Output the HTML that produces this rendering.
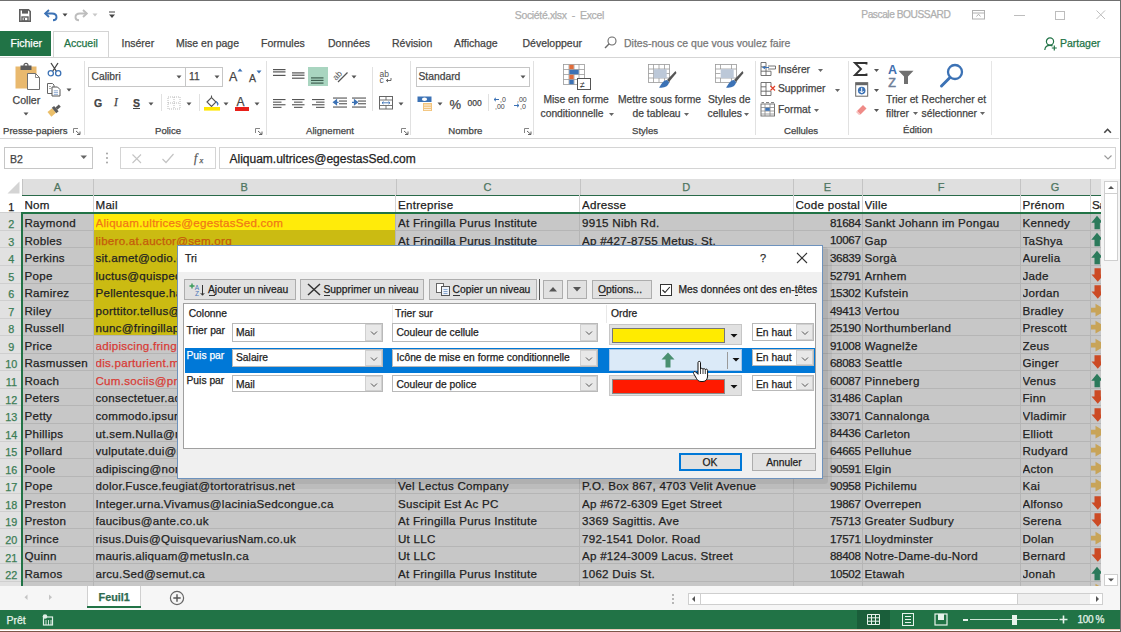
<!DOCTYPE html>
<html><head><meta charset="utf-8"><style>
html,body{margin:0;padding:0;width:1121px;height:632px;overflow:hidden;background:#fff}
body{position:relative;font-family:'Liberation Sans', sans-serif}
div{position:absolute;box-sizing:content-box}
.t{white-space:pre;-webkit-text-stroke:0.25px currentColor}
svg{overflow:visible}
</style></head><body>
<div style="left:0px;top:0px;width:1121px;height:632px;background:#fff"></div><div style="left:0px;top:0px;width:1121px;height:1px;background:#707070"></div><div class="t" style="left:514.8px;top:9.88px;font-size:10.5px;line-height:10.5px;color:#afafaf;letter-spacing:-0.35px">Société.xlsx  -  Excel</div><div class="t" style="left:861.3px;top:10.13px;font-size:10.2px;line-height:10.2px;color:#afafaf;letter-spacing:-0.45px">Pascale BOUSSARD</div><div style="left:0px;top:31px;width:51px;height:25px;background:#217346"></div><div class="t" style="left:10.5px;top:38.38px;font-size:10.5px;line-height:10.5px;color:#fff;">Fichier</div><div style="left:53px;top:31px;width:56px;height:27px;background:#fff;border:1px solid #d4d4d4;border-bottom:none;box-sizing:border-box"></div><div class="t" style="left:64px;top:38.38px;font-size:10.5px;line-height:10.5px;color:#217346;">Accueil</div><div class="t" style="left:121.5px;top:38.38px;font-size:10.5px;line-height:10.5px;color:#444;">Insérer</div><div class="t" style="left:176px;top:38.38px;font-size:10.5px;line-height:10.5px;color:#444;">Mise en page</div><div class="t" style="left:261px;top:38.38px;font-size:10.5px;line-height:10.5px;color:#444;">Formules</div><div class="t" style="left:328px;top:38.38px;font-size:10.5px;line-height:10.5px;color:#444;">Données</div><div class="t" style="left:392px;top:38.38px;font-size:10.5px;line-height:10.5px;color:#444;">Révision</div><div class="t" style="left:454px;top:38.38px;font-size:10.5px;line-height:10.5px;color:#444;">Affichage</div><div class="t" style="left:522.5px;top:38.38px;font-size:10.5px;line-height:10.5px;color:#444;">Développeur</div><div class="t" style="left:624px;top:38.38px;font-size:10.5px;line-height:10.5px;color:#777;">Dites-nous ce que vous voulez faire</div><div class="t" style="left:1060px;top:38.38px;font-size:10.5px;line-height:10.5px;color:#217346;">Partager</div><div style="left:0px;top:57px;width:1121px;height:1px;background:#d5d5d5"></div><div style="left:0px;top:138px;width:1119px;height:1px;background:#d5d5d5"></div><svg style="position:absolute;left:19px;top:9px;" width="12" height="13" viewBox="0 0 12 13"><path d="M0.8 0.8 H9.5 L11.2 2.5 V12.2 H0.8 Z" fill="none" stroke="#5f5f5f" stroke-width="1.6"/><rect x="3" y="1" width="6" height="3.6" fill="#5f5f5f"/><rect x="3" y="8" width="6" height="4" fill="none" stroke="#5f5f5f" stroke-width="1.4"/><rect x="4.6" y="9" width="1.4" height="3" fill="#5f5f5f"/></svg><svg style="position:absolute;left:44px;top:9px;" width="14" height="12" viewBox="0 0 14 12"><path d="M1.5 4.5 H8 C11 4.5 12.5 6.3 12.5 8.2 C12.5 10.2 11 11.3 9 11.3" fill="none" stroke="#3c72b5" stroke-width="1.9"/><path d="M5 1 L1.2 4.5 L5 8" fill="none" stroke="#3c72b5" stroke-width="1.9"/></svg><svg style="position:absolute;left:62px;top:13px;" width="6" height="4" viewBox="0 0 6 4"><path d="M0.5 0.5 H5.5 L3 3.5 Z" fill="#444"/></svg><svg style="position:absolute;left:74px;top:9px;" width="14" height="12" viewBox="0 0 14 12"><path d="M12.5 4.5 H6 C3 4.5 1.5 6.3 1.5 8.2 C1.5 10.2 3 11.3 5 11.3" fill="none" stroke="#bdbdbd" stroke-width="1.9"/><path d="M9 1 L12.8 4.5 L9 8" fill="none" stroke="#bdbdbd" stroke-width="1.9"/></svg><svg style="position:absolute;left:92px;top:13px;" width="6" height="4" viewBox="0 0 6 4"><path d="M0.5 0.5 H5.5 L3 3.5 Z" fill="#c8c8c8"/></svg><svg style="position:absolute;left:108px;top:11px;" width="8" height="8" viewBox="0 0 8 8"><path d="M1 1 H7" stroke="#444" stroke-width="1"/><path d="M1 3.5 H7 L4 7 Z" fill="#444"/></svg><svg style="position:absolute;left:972px;top:10px;" width="14" height="10" viewBox="0 0 14 10"><rect x="0.5" y="0.5" width="12" height="8.5" fill="none" stroke="#b0b0b0"/><path d="M0.5 3 H12.5" stroke="#b0b0b0"/><path d="M4.5 6.5 L6.5 4.2 L8.5 6.5" fill="none" stroke="#b0b0b0"/></svg><div style="left:1014px;top:14.5px;width:10.5px;height:1px;background:#bdbdbd"></div><div style="left:1055px;top:10.5px;width:9.5px;height:9px;border:1px solid #bdbdbd;box-sizing:border-box"></div><svg style="position:absolute;left:1096px;top:10px;" width="10" height="10" viewBox="0 0 10 10"><path d="M0.5 0.5 L9 9 M9 0.5 L0.5 9" stroke="#bdbdbd" stroke-width="1"/></svg><svg style="position:absolute;left:604px;top:36px;" width="13" height="13" viewBox="0 0 13 13"><circle cx="8" cy="5" r="4" fill="none" stroke="#6a6a6a" stroke-width="1.1"/><path d="M5.2 7.8 L1 12" stroke="#6a6a6a" stroke-width="1.4"/></svg><svg style="position:absolute;left:1044px;top:37px;" width="13" height="14" viewBox="0 0 13 14"><circle cx="6" cy="4.5" r="3.6" fill="none" stroke="#217346" stroke-width="1.2"/><path d="M0.8 13 C1 9.8 3 8.3 6 8.3 C7.2 8.3 8 8.5 8.6 8.9" fill="none" stroke="#217346" stroke-width="1.2"/><path d="M10.3 8.5 V13.5 M7.8 11 H12.8" stroke="#217346" stroke-width="1.2"/></svg><svg style="position:absolute;left:14px;top:63px;" width="27" height="28" viewBox="0 0 27 28"><rect x="1.5" y="3.5" width="21" height="22" fill="#e9b96e"/><path d="M6.5 2.5 H17.5 V7 H6.5 Z" fill="#5b5b5b"/><circle cx="12" cy="2.3" r="2" fill="none" stroke="#5b5b5b" stroke-width="1.2"/><path d="M13.5 10.5 H21.5 L25.5 14.5 V26.5 H13.5 Z" fill="#fff" stroke="#6f6f6f" stroke-width="1"/><path d="M21.5 10.5 V14.5 H25.5" fill="none" stroke="#6f6f6f" stroke-width="0.8"/></svg><div class="t" style="left:12.5px;top:94.99px;font-size:10.6px;line-height:10.6px;color:#444;">Coller</div><svg style="position:absolute;left:23px;top:112px;" width="6" height="4" viewBox="0 0 6 4"><path d="M0.5 0.5 H5.5 L3 3.5 Z" fill="#555"/></svg><svg style="position:absolute;left:47px;top:62px;" width="15" height="15" viewBox="0 0 15 15"><path d="M4 1 L9.5 9.5 M11 1 L5.5 9.5" stroke="#444" stroke-width="1.3"/><circle cx="3.8" cy="11.3" r="2.6" fill="none" stroke="#3c72b5" stroke-width="1.3"/><circle cx="11.2" cy="11.3" r="2.6" fill="none" stroke="#3c72b5" stroke-width="1.3"/></svg><svg style="position:absolute;left:46px;top:82px;" width="16" height="15" viewBox="0 0 16 15"><path d="M1.5 1.5 H6.5 L8 3 V11.5 H1.5 Z" fill="#fff" stroke="#666" stroke-width="1"/><path d="M6 5 H11.5 L14 7.5 V14 H6 Z" fill="#fff" stroke="#555" stroke-width="1"/><path d="M7.8 8.8 H12 M7.8 10.6 H12 M7.8 12.4 H12" stroke="#7b9bc8" stroke-width="0.8"/><path d="M3 4.5 H5 M3 6.5 H5" stroke="#888" stroke-width="0.7"/></svg><svg style="position:absolute;left:66px;top:88px;" width="6" height="4" viewBox="0 0 6 4"><path d="M0.5 0.5 H5.5 L3 3.5 Z" fill="#555"/></svg><svg style="position:absolute;left:47px;top:103px;" width="15" height="13" viewBox="0 0 15 13"><g transform="rotate(-40 7.5 6.5)"><rect x="0.5" y="4" width="6" height="6" fill="#ebbf6a"/><rect x="6.5" y="3.5" width="3" height="7" fill="#5b5b5b"/><rect x="9.5" y="5.5" width="4.5" height="3" fill="#5b5b5b"/></g></svg><div class="t" style="left:3px;top:125.64px;font-size:9.6px;line-height:9.6px;color:#444;">Presse-papiers</div><svg style="position:absolute;left:73px;top:128px;" width="8" height="7" viewBox="0 0 8 7"><path d="M0.5 0.5 H5 M0.5 0.5 V5" stroke="#777" stroke-width="0.9"/><path d="M3 3 L7 6.5 M7 3.5 V6.5 H4" stroke="#555" stroke-width="0.9" fill="none"/></svg><div style="left:84px;top:61px;width:1px;height:74px;background:#e1e1e1"></div><div style="left:88px;top:67px;width:97.5px;height:20px;border:1px solid #c6c6c6;box-sizing:border-box"></div><div style="left:185px;top:67px;width:38px;height:20px;border:1px solid #c6c6c6;border-left:none;box-sizing:border-box"></div><div class="t" style="left:91.5px;top:72.05px;font-size:10.3px;line-height:10.3px;color:#444;">Calibri</div><div class="t" style="left:189px;top:72.05px;font-size:10.3px;line-height:10.3px;color:#444;">11</div><svg style="position:absolute;left:176px;top:75px;" width="6" height="4" viewBox="0 0 6 4"><path d="M0.5 0.5 H5.5 L3 3.5 Z" fill="#555"/></svg><svg style="position:absolute;left:214px;top:75px;" width="6" height="4" viewBox="0 0 6 4"><path d="M0.5 0.5 H5.5 L3 3.5 Z" fill="#555"/></svg><div class="t" style="left:229px;top:70.88px;font-size:12.5px;line-height:12.5px;color:#444;">A</div><svg style="position:absolute;left:237px;top:68px;" width="6" height="4" viewBox="0 0 6 4"><path d="M0.5 3.5 H5.5 L3 0.5 Z" fill="#3c72b5"/></svg><div class="t" style="left:249px;top:72.58px;font-size:10.5px;line-height:10.5px;color:#444;">A</div><svg style="position:absolute;left:255.5px;top:70px;" width="6" height="4" viewBox="0 0 6 4"><path d="M0.5 0.5 H5.5 L3 3.5 Z" fill="#3c72b5"/></svg><div class="t" style="left:94px;top:97.88px;font-size:10.5px;line-height:10.5px;color:#444;font-weight:bold">G</div><div class="t" style="left:114px;top:97.02px;font-size:11.5px;line-height:11.5px;color:#444;font-family:'Liberation Serif';font-style:italic">I</div><div class="t" style="left:133px;top:97.88px;font-size:10.5px;line-height:10.5px;color:#444;font-weight:bold">S</div><div style="left:133px;top:108.3px;width:7px;height:1.2px;background:#444"></div><svg style="position:absolute;left:148px;top:102px;" width="6" height="4" viewBox="0 0 6 4"><path d="M0.5 0.5 H5.5 L3 3.5 Z" fill="#555"/></svg><div style="left:160.5px;top:94px;width:1px;height:17px;background:#e1e1e1"></div><svg style="position:absolute;left:167px;top:96px;" width="14" height="14" viewBox="0 0 14 14"><rect x="1" y="1" width="12" height="12" fill="none" stroke="#aaa" stroke-width="0.8" stroke-dasharray="1 1"/><path d="M7 1 V13 M1 7 H13" stroke="#aaa" stroke-width="0.8" stroke-dasharray="1 1"/></svg><svg style="position:absolute;left:185.5px;top:102px;" width="6" height="4" viewBox="0 0 6 4"><path d="M0.5 0.5 H5.5 L3 3.5 Z" fill="#555"/></svg><div style="left:198.5px;top:94px;width:1px;height:17px;background:#e1e1e1"></div><svg style="position:absolute;left:203px;top:95px;" width="18" height="16" viewBox="0 0 18 16"><path d="M4 7 L8.5 2.5 L13 7 L8.5 11.5 Z" fill="#fff" stroke="#555" stroke-width="1.1"/><path d="M8.5 2.5 V0.5" stroke="#555" stroke-width="1.1"/><path d="M13 6.5 C15 7 15.5 9 14.5 10.5" fill="#3c72b5" stroke="#3c72b5"/><rect x="1" y="12" width="16" height="3.6" fill="#ffe600"/></svg><svg style="position:absolute;left:223px;top:102px;" width="6" height="4" viewBox="0 0 6 4"><path d="M0.5 0.5 H5.5 L3 3.5 Z" fill="#555"/></svg><div class="t" style="left:236.5px;top:95.80px;font-size:12px;line-height:12px;color:#444;">A</div><div style="left:234.5px;top:107px;width:14.5px;height:3.6px;background:#e8201a"></div><svg style="position:absolute;left:253.5px;top:102px;" width="6" height="4" viewBox="0 0 6 4"><path d="M0.5 0.5 H5.5 L3 3.5 Z" fill="#555"/></svg><div class="t" style="left:155px;top:125.84px;font-size:9.6px;line-height:9.6px;color:#444;">Police</div><svg style="position:absolute;left:255px;top:128px;" width="8" height="7" viewBox="0 0 8 7"><path d="M0.5 0.5 H5 M0.5 0.5 V5" stroke="#777" stroke-width="0.9"/><path d="M3 3 L7 6.5 M7 3.5 V6.5 H4" stroke="#555" stroke-width="0.9" fill="none"/></svg><div style="left:265.5px;top:61px;width:1px;height:74px;background:#e1e1e1"></div><svg style="position:absolute;left:273px;top:68px;" width="14" height="10" viewBox="0 0 14 10"><rect x="0" y="1" width="12.5" height="1.2" fill="#555"/><rect x="0" y="3.3" width="12.5" height="1.2" fill="#555"/><rect x="0" y="6.8" width="12.5" height="1.2" fill="#555"/></svg><svg style="position:absolute;left:292px;top:71px;" width="14" height="10" viewBox="0 0 14 10"><rect x="0" y="1.3" width="12.5" height="1.2" fill="#555"/><rect x="0" y="3.6" width="12.5" height="1.2" fill="#555"/><rect x="0" y="6.6" width="12.5" height="1.2" fill="#555"/></svg><div style="left:308.2px;top:67px;width:19.4px;height:19.4px;background:#a9d5c0"></div><svg style="position:absolute;left:311px;top:75px;" width="14" height="10" viewBox="0 0 14 10"><rect x="0" y="2.3" width="12.5" height="1.2" fill="#3f5f50"/><rect x="0" y="4.8" width="12.5" height="1.2" fill="#3f5f50"/><rect x="0" y="7.5" width="12.5" height="1.2" fill="#3f5f50"/></svg><svg style="position:absolute;left:332px;top:69px;" width="17" height="14" viewBox="0 0 17 14"><text x="1" y="9" font-size="8.5" font-family="Liberation Sans" fill="#555" transform="rotate(-45 6 7)">ab</text><path d="M6 13 L15.5 3.5" stroke="#555" stroke-width="1.2"/></svg><svg style="position:absolute;left:351px;top:75px;" width="6" height="4" viewBox="0 0 6 4"><path d="M0.5 0.5 H5.5 L3 3.5 Z" fill="#555"/></svg><div style="left:372px;top:67px;width:1px;height:44px;background:#e1e1e1"></div><svg style="position:absolute;left:379px;top:69px;" width="15" height="15" viewBox="0 0 15 15"><text x="0.5" y="7.5" font-size="8.5" font-family="Liberation Sans" fill="#555">ab</text><text x="0.5" y="14" font-size="8.5" font-family="Liberation Sans" fill="#555">c</text><path d="M12 9 V11.5 H7.5 M9 10 L7.3 11.5 L9 13" fill="none" stroke="#555" stroke-width="0.9"/></svg><svg style="position:absolute;left:272.5px;top:98px;" width="13" height="11" viewBox="0 0 13 11"><rect x="0" y="1" width="12.5" height="1.1" fill="#555"/><rect x="0" y="3.6" width="8.5" height="1.1" fill="#555"/><rect x="0" y="6.2" width="12.5" height="1.1" fill="#555"/><rect x="0" y="8.8" width="8.5" height="1.1" fill="#555"/></svg><svg style="position:absolute;left:292px;top:98px;" width="13" height="11" viewBox="0 0 13 11"><rect x="0.0" y="1" width="12.5" height="1.1" fill="#555"/><rect x="2.0" y="3.6" width="8.5" height="1.1" fill="#555"/><rect x="0.0" y="6.2" width="12.5" height="1.1" fill="#555"/><rect x="2.0" y="8.8" width="8.5" height="1.1" fill="#555"/></svg><svg style="position:absolute;left:311.5px;top:98px;" width="13" height="11" viewBox="0 0 13 11"><rect x="0.0" y="1" width="12.5" height="1.1" fill="#555"/><rect x="4.0" y="3.6" width="8.5" height="1.1" fill="#555"/><rect x="0.0" y="6.2" width="12.5" height="1.1" fill="#555"/><rect x="4.0" y="8.8" width="8.5" height="1.1" fill="#555"/></svg><svg style="position:absolute;left:332.5px;top:97px;" width="15" height="12" viewBox="0 0 15 12"><rect x="0" y="0.5" width="14" height="1.1" fill="#555"/><rect x="6" y="3.5" width="8" height="1.1" fill="#555"/><rect x="6" y="6.2" width="8" height="1.1" fill="#555"/><rect x="0" y="9.5" width="14" height="1.1" fill="#555"/><path d="M0.5 5.3 L3.5 3 V7.6 Z M3 5.3 H5.5" fill="#3c72b5" stroke="#3c72b5" stroke-width="1.2"/></svg><svg style="position:absolute;left:352px;top:97px;" width="15" height="12" viewBox="0 0 15 12"><rect x="0" y="0.5" width="14" height="1.1" fill="#555"/><rect x="6" y="3.5" width="8" height="1.1" fill="#555"/><rect x="6" y="6.2" width="8" height="1.1" fill="#555"/><rect x="0" y="9.5" width="14" height="1.1" fill="#555"/><path d="M5.5 5.3 L2.5 3 V7.6 Z M0 5.3 H3" fill="#3c72b5" stroke="#3c72b5" stroke-width="1.2"/></svg><svg style="position:absolute;left:379px;top:96px;" width="15" height="14" viewBox="0 0 15 14"><rect x="0.5" y="0.5" width="13" height="12.5" fill="#fff" stroke="#666" stroke-width="1"/><path d="M0.5 4 H13.5 M0.5 9.5 H13.5 M7 0.5 V4 M7 9.5 V13" stroke="#666" stroke-width="0.9"/><path d="M3 6.8 H11 M3 6.8 L4.5 5.6 M3 6.8 L4.5 8 M11 6.8 L9.5 5.6 M11 6.8 L9.5 8" stroke="#3c72b5" stroke-width="0.9"/></svg><svg style="position:absolute;left:398px;top:102px;" width="6" height="4" viewBox="0 0 6 4"><path d="M0.5 0.5 H5.5 L3 3.5 Z" fill="#555"/></svg><div class="t" style="left:306px;top:125.84px;font-size:9.6px;line-height:9.6px;color:#444;">Alignement</div><svg style="position:absolute;left:401px;top:128px;" width="8" height="7" viewBox="0 0 8 7"><path d="M0.5 0.5 H5 M0.5 0.5 V5" stroke="#777" stroke-width="0.9"/><path d="M3 3 L7 6.5 M7 3.5 V6.5 H4" stroke="#555" stroke-width="0.9" fill="none"/></svg><div style="left:410px;top:61px;width:1px;height:74px;background:#e1e1e1"></div><div style="left:415.5px;top:67px;width:114.5px;height:19.6px;border:1px solid #c6c6c6;box-sizing:border-box"></div><div class="t" style="left:418.5px;top:72.05px;font-size:10.3px;line-height:10.3px;color:#444;">Standard</div><svg style="position:absolute;left:520px;top:75px;" width="6" height="4" viewBox="0 0 6 4"><path d="M0.5 0.5 H5.5 L3 3.5 Z" fill="#555"/></svg><svg style="position:absolute;left:417px;top:96px;" width="16" height="16" viewBox="0 0 16 16"><rect x="0.5" y="0.5" width="14" height="5.5" fill="#3c72b5"/><ellipse cx="7.5" cy="3.3" rx="2.6" ry="1.8" fill="#fff"/><rect x="6" y="7" width="9" height="8" fill="#f3c47c"/><path d="M7 9 H14 M7 11.3 H14 M7 13.6 H14" stroke="#fff" stroke-width="0.8"/></svg><svg style="position:absolute;left:436.5px;top:102px;" width="6" height="4" viewBox="0 0 6 4"><path d="M0.5 0.5 H5.5 L3 3.5 Z" fill="#555"/></svg><div class="t" style="left:449.5px;top:97.75px;font-size:13px;line-height:13px;color:#444;">%</div><div class="t" style="left:467.5px;top:99.08px;font-size:8.5px;line-height:8.5px;color:#444;">000</div><div style="left:487.5px;top:94px;width:1px;height:17px;background:#e1e1e1"></div><svg style="position:absolute;left:493px;top:95px;" width="15" height="15" viewBox="0 0 15 15"><path d="M1 4.5 H6 M1 4.5 L3 2.8 M1 4.5 L3 6.2" stroke="#3c72b5" stroke-width="1" fill="none"/><text x="7" y="7" font-size="7" font-family="Liberation Sans" fill="#444">,0</text><text x="2" y="14" font-size="7" font-family="Liberation Sans" fill="#444">,00</text></svg><svg style="position:absolute;left:512.5px;top:95px;" width="15" height="15" viewBox="0 0 15 15"><text x="4" y="7" font-size="7" font-family="Liberation Sans" fill="#444">,00</text><path d="M1 10.5 H6 M6 10.5 L4 8.8 M6 10.5 L4 12.2" stroke="#3c72b5" stroke-width="1" fill="none"/><text x="7" y="14" font-size="7" font-family="Liberation Sans" fill="#444">,0</text></svg><div class="t" style="left:448.3px;top:125.84px;font-size:9.6px;line-height:9.6px;color:#444;">Nombre</div><svg style="position:absolute;left:523.5px;top:128px;" width="8" height="7" viewBox="0 0 8 7"><path d="M0.5 0.5 H5 M0.5 0.5 V5" stroke="#777" stroke-width="0.9"/><path d="M3 3 L7 6.5 M7 3.5 V6.5 H4" stroke="#555" stroke-width="0.9" fill="none"/></svg><div style="left:533px;top:61px;width:1px;height:74px;background:#e1e1e1"></div><svg style="position:absolute;left:563px;top:63px;" width="30" height="28" viewBox="0 0 30 28"><g stroke="#9a9a9a" stroke-width="0.8" fill="#fff"><rect x="0.5" y="1.5" width="21" height="20"/></g><path d="M0.5 6.5 H21.5 M0.5 11.5 H21.5 M0.5 16.5 H21.5 M6 1.5 V21.5 M11 1.5 V21.5 M16 1.5 V21.5" stroke="#9a9a9a" stroke-width="0.8"/><rect x="6.3" y="1.8" width="4.4" height="4.4" fill="#e06c3b"/><rect x="6.3" y="6.8" width="9.4" height="4.4" fill="#3c72b5"/><rect x="6.3" y="11.8" width="4.4" height="4.4" fill="#e06c3b"/><rect x="6.3" y="16.8" width="4.4" height="4.4" fill="#3c72b5"/><rect x="14.5" y="15.5" width="13" height="11" fill="#fff" stroke="#555" stroke-width="1"/><text x="17" y="24.5" font-size="9" font-family="Liberation Sans" fill="#333">≠</text></svg><div class="t" style="left:543.5px;top:95.05px;font-size:10.3px;line-height:10.3px;color:#444;">Mise en forme</div><div class="t" style="left:540.5px;top:108.84px;font-size:10.3px;line-height:10.3px;color:#444;">conditionnelle</div><svg style="position:absolute;left:609px;top:112.5px;" width="5" height="3" viewBox="0 0 5 3"><path d="M0 0 H5 L2.5 3 Z" fill="#666"/></svg><svg style="position:absolute;left:648px;top:64px;" width="30" height="27" viewBox="0 0 30 27"><rect x="0.5" y="0.5" width="21" height="18" fill="#fff" stroke="#9a9a9a" stroke-width="0.8"/><path d="M0.5 5 H21.5 M0.5 9.5 H21.5 M0.5 14 H21.5 M5.5 0.5 V18.5 M11 0.5 V18.5 M16.5 0.5 V18.5" stroke="#9a9a9a" stroke-width="0.8"/><rect x="5.7" y="5.2" width="13" height="9" fill="#bcc8d8"/><path d="M27.5 7 L19 16 L21 18 L28.5 9 Z" fill="#555"/><path d="M19 16 C15 16 14 20 11 23.5 C16 24.5 21 22 21 18 Z" fill="#3c72b5"/></svg><div class="t" style="left:618px;top:95.05px;font-size:10.3px;line-height:10.3px;color:#444;">Mettre sous forme</div><div class="t" style="left:632.5px;top:108.84px;font-size:10.3px;line-height:10.3px;color:#444;">de tableau</div><svg style="position:absolute;left:684px;top:112.5px;" width="5" height="3" viewBox="0 0 5 3"><path d="M0 0 H5 L2.5 3 Z" fill="#666"/></svg><svg style="position:absolute;left:715px;top:64px;" width="30" height="27" viewBox="0 0 30 27"><rect x="0.5" y="0.5" width="21" height="18" fill="#fff" stroke="#9a9a9a" stroke-width="0.8"/><path d="M0.5 5 H21.5 M0.5 14 H21.5 M5.5 0.5 V5 M5.5 14 V18.5 M16.5 0.5 V5 M16.5 14 V18.5 M0.5 9.5 H5.5" stroke="#9a9a9a" stroke-width="0.8"/><rect x="5.7" y="5.2" width="13" height="9" fill="#bcc8d8"/><path d="M27.5 7 L19 16 L21 18 L28.5 9 Z" fill="#555"/><path d="M19 16 C15 16 14 20 11 23.5 C16 24.5 21 22 21 18 Z" fill="#3c72b5"/></svg><div class="t" style="left:708px;top:95.05px;font-size:10.3px;line-height:10.3px;color:#444;">Styles de</div><div class="t" style="left:707.5px;top:108.84px;font-size:10.3px;line-height:10.3px;color:#444;">cellules</div><svg style="position:absolute;left:743.5px;top:112.5px;" width="5" height="3" viewBox="0 0 5 3"><path d="M0 0 H5 L2.5 3 Z" fill="#666"/></svg><div class="t" style="left:632px;top:125.84px;font-size:9.6px;line-height:9.6px;color:#444;">Styles</div><div style="left:755.3px;top:61px;width:1px;height:74px;background:#e1e1e1"></div><svg style="position:absolute;left:760px;top:62px;" width="17" height="15" viewBox="0 0 17 15"><path d="M1 0.5 H6 V13.5 H1 Z M1 4.8 H6 M1 9.2 H6 M6 9.2 H11 V13.5 H6" fill="#fff" stroke="#666" stroke-width="0.9"/><path d="M8 4 H15.5 V7 H8" fill="#fff" stroke="#666" stroke-width="0.9"/><path d="M2 5.5 L5 3.8 V7.2 Z" fill="#3c72b5"/><path d="M4 5.5 H9" stroke="#3c72b5" stroke-width="1"/></svg><div class="t" style="left:778px;top:64.75px;font-size:10.3px;line-height:10.3px;color:#444;">Insérer</div><svg style="position:absolute;left:817.5px;top:68.5px;" width="5" height="3" viewBox="0 0 5 3"><path d="M0 0 H5 L2.5 3 Z" fill="#666"/></svg><svg style="position:absolute;left:760px;top:82px;" width="17" height="15" viewBox="0 0 17 15"><path d="M1 0.5 H6 V13.5 H1 Z M1 4.8 H6 M1 9.2 H6 M6 9.2 H11 V13.5 H6 M6 0.5 H11 V4.8" fill="#fff" stroke="#666" stroke-width="0.9"/><path d="M10.5 4 L15 8.5 M15 4 L10.5 8.5" stroke="#e0402a" stroke-width="1.2"/></svg><div class="t" style="left:778px;top:84.45px;font-size:10.3px;line-height:10.3px;color:#444;">Supprimer</div><svg style="position:absolute;left:835px;top:88.5px;" width="5" height="3" viewBox="0 0 5 3"><path d="M0 0 H5 L2.5 3 Z" fill="#666"/></svg><svg style="position:absolute;left:760px;top:102px;" width="17" height="15" viewBox="0 0 17 15"><rect x="1" y="2" width="13.5" height="12" fill="#fff" stroke="#666" stroke-width="0.9"/><path d="M1 5.5 H14.5 M1 9 H14.5 M1 12 H14.5 M5 2 V14 M10 2 V14" stroke="#888" stroke-width="0.8"/><rect x="5.3" y="5.8" width="4.5" height="3" fill="#3c72b5"/><path d="M1.5 0.5 H4 M6 0.5 H9 M11 0.5 H14" stroke="#666" stroke-width="0.8"/></svg><div class="t" style="left:778px;top:104.75px;font-size:10.3px;line-height:10.3px;color:#444;">Format</div><svg style="position:absolute;left:814px;top:108.5px;" width="5" height="3" viewBox="0 0 5 3"><path d="M0 0 H5 L2.5 3 Z" fill="#666"/></svg><div class="t" style="left:784px;top:125.84px;font-size:9.6px;line-height:9.6px;color:#444;">Cellules</div><div style="left:848px;top:61px;width:1px;height:74px;background:#e1e1e1"></div><svg style="position:absolute;left:854px;top:62px;" width="14" height="14" viewBox="0 0 14 14"><path d="M12.5 2.5 V1 H1 L7 7 L1 13 H12.5 V11.5" fill="none" stroke="#333" stroke-width="1.9"/></svg><svg style="position:absolute;left:874px;top:68.5px;" width="5" height="3" viewBox="0 0 5 3"><path d="M0 0 H5 L2.5 3 Z" fill="#555"/></svg><svg style="position:absolute;left:855px;top:82px;" width="14" height="15" viewBox="0 0 14 15"><rect x="0.7" y="0.7" width="12" height="13.5" fill="#fff" stroke="#666" stroke-width="1"/><rect x="0.7" y="0.7" width="12" height="2.5" fill="#666"/><circle cx="6.7" cy="8.6" r="3.8" fill="#3c72b5"/><path d="M6.7 5.8 V11 M4.7 9 L6.7 11 L8.7 9" fill="none" stroke="#fff" stroke-width="1"/></svg><svg style="position:absolute;left:874px;top:88.5px;" width="5" height="3" viewBox="0 0 5 3"><path d="M0 0 H5 L2.5 3 Z" fill="#555"/></svg><svg style="position:absolute;left:855px;top:103px;" width="13" height="12" viewBox="0 0 13 12"><path d="M2 8 L8 2 L11.5 5.5 L5.5 11.5 Z" fill="#ef8b87"/><path d="M2 8 L5.5 11.5 L4 12 L1 9 Z" fill="#f7c0be"/></svg><svg style="position:absolute;left:874px;top:108.5px;" width="5" height="3" viewBox="0 0 5 3"><path d="M0 0 H5 L2.5 3 Z" fill="#555"/></svg><svg style="position:absolute;left:886px;top:64px;" width="30" height="25" viewBox="0 0 30 25"><text x="2" y="10.4" font-size="12.5" font-weight="bold" font-family="Liberation Sans" fill="#3f6fb0">A</text><text x="2.3" y="23.2" font-size="12.5" font-family="Liberation Sans" fill="#6f7f98" stroke="#6f7f98" stroke-width="0.5">Z</text><path d="M12.5 6.8 H27.5 L22 12.5 V20 H18 V12.5 Z" fill="#707070"/></svg><div class="t" style="left:886px;top:95.45px;font-size:10.3px;line-height:10.3px;color:#444;">Trier et</div><div class="t" style="left:886px;top:109.05px;font-size:10.3px;line-height:10.3px;color:#444;">filtrer</div><svg style="position:absolute;left:912.5px;top:112px;" width="5" height="3" viewBox="0 0 5 3"><path d="M0 0 H5 L2.5 3 Z" fill="#666"/></svg><svg style="position:absolute;left:939px;top:63px;" width="26" height="25" viewBox="0 0 26 25"><circle cx="16" cy="9" r="7" fill="none" stroke="#3c72b5" stroke-width="2.3"/><path d="M11 14.5 L2.5 23" stroke="#3c72b5" stroke-width="3" stroke-linecap="round"/></svg><div class="t" style="left:921.5px;top:95.45px;font-size:10.3px;line-height:10.3px;color:#444;">Rechercher et</div><div class="t" style="left:921.5px;top:109.05px;font-size:10.3px;line-height:10.3px;color:#444;">sélectionner</div><svg style="position:absolute;left:979.5px;top:112px;" width="5" height="3" viewBox="0 0 5 3"><path d="M0 0 H5 L2.5 3 Z" fill="#666"/></svg><div class="t" style="left:903px;top:125.04px;font-size:9.6px;line-height:9.6px;color:#444;">Édition</div><div style="left:990.5px;top:61px;width:1px;height:74px;background:#e6e6e6"></div><svg style="position:absolute;left:1103px;top:127px;" width="10" height="8" viewBox="0 0 10 8"><path d="M1.3 5.8 L4.6 2.3 L7.9 5.8" fill="none" stroke="#444" stroke-width="1.6"/></svg><div style="left:4px;top:147px;width:89px;height:22px;border:1px solid #c6c6c6;box-sizing:border-box;background:#fff"></div><div class="t" style="left:10px;top:153.57px;font-size:10.5px;line-height:10.5px;color:#444;">B2</div><div style="left:120px;top:147px;width:96px;height:22px;border:1px solid #d4d4d4;box-sizing:border-box;background:#fff"></div><svg style="position:absolute;left:80px;top:155px;" width="8" height="5" viewBox="0 0 8 5"><path d="M0.5 0.5 H7 L3.75 4 Z" fill="#666"/></svg><svg style="position:absolute;left:104px;top:151px;" width="6" height="14" viewBox="0 0 6 14"><circle cx="3" cy="2.5" r="0.9" fill="#999"/><circle cx="3" cy="7" r="0.9" fill="#999"/><circle cx="3" cy="11.5" r="0.9" fill="#999"/></svg><svg style="position:absolute;left:131px;top:153px;" width="12" height="12" viewBox="0 0 12 12"><path d="M1.5 1.5 L10 10 M10 1.5 L1.5 10" stroke="#c4c4c4" stroke-width="1.1"/></svg><svg style="position:absolute;left:161px;top:152px;" width="14" height="13" viewBox="0 0 14 13"><path d="M1.5 7 L5 10.5 L12.5 2" fill="none" stroke="#c4c4c4" stroke-width="1.2"/></svg><div class="t" style="left:194px;top:153.22px;font-size:11.5px;line-height:11.5px;color:#555;font-family:'Liberation Serif';font-style:italic">f</div><div class="t" style="left:199.5px;top:156.28px;font-size:8.5px;line-height:8.5px;color:#555;font-family:'Liberation Serif';font-style:italic">x</div><div style="left:219px;top:147px;width:897px;height:22px;border:1px solid #d4d4d4;box-sizing:border-box;background:#fff"></div><svg style="position:absolute;left:1103px;top:154px;" width="10" height="7" viewBox="0 0 10 7"><path d="M1.5 1.5 L5 5 L8.5 1.5" fill="none" stroke="#999" stroke-width="1.1"/></svg><div class="t" style="left:229.5px;top:152.80px;font-size:12px;line-height:12px;color:#222;">Aliquam.ultrices@egestasSed.com</div><div style="left:0px;top:178.5px;width:1101.3px;height:16.80000000000001px;background:#dfdfdf"></div><div style="left:0px;top:178.5px;width:22px;height:16.80000000000001px;background:#fff"></div><svg style="position:absolute;left:0px;top:178.5px;" width="22" height="17" viewBox="0 0 22 17"><path d="M19.5 2.5 L19.5 14.5 L7.5 14.5 Z" fill="#d4d4d4"/></svg><div style="left:22px;top:178.5px;width:1px;height:16.80000000000001px;background:#c4c4c4"></div><div class="t" style="left:-142.5px;width:400px;text-align:center;top:182.15px;font-size:11px;line-height:11px;color:#4e7560;">A</div><div style="left:93px;top:178.5px;width:1px;height:16.80000000000001px;background:#c4c4c4"></div><div class="t" style="left:44.25px;width:400px;text-align:center;top:182.15px;font-size:11px;line-height:11px;color:#4e7560;">B</div><div style="left:395.5px;top:178.5px;width:1px;height:16.80000000000001px;background:#c4c4c4"></div><div class="t" style="left:287.5px;width:400px;text-align:center;top:182.15px;font-size:11px;line-height:11px;color:#4e7560;">C</div><div style="left:579.5px;top:178.5px;width:1px;height:16.80000000000001px;background:#c4c4c4"></div><div class="t" style="left:486.25px;width:400px;text-align:center;top:182.15px;font-size:11px;line-height:11px;color:#4e7560;">D</div><div style="left:793px;top:178.5px;width:1px;height:16.80000000000001px;background:#c4c4c4"></div><div class="t" style="left:627.5px;width:400px;text-align:center;top:182.15px;font-size:11px;line-height:11px;color:#4e7560;">E</div><div style="left:862px;top:178.5px;width:1px;height:16.80000000000001px;background:#c4c4c4"></div><div class="t" style="left:741.0px;width:400px;text-align:center;top:182.15px;font-size:11px;line-height:11px;color:#4e7560;">F</div><div style="left:1020px;top:178.5px;width:1px;height:16.80000000000001px;background:#c4c4c4"></div><div class="t" style="left:855.0px;width:400px;text-align:center;top:182.15px;font-size:11px;line-height:11px;color:#4e7560;">G</div><div style="left:1090px;top:178.5px;width:1px;height:16.80000000000001px;background:#c4c4c4"></div><div style="left:0px;top:195.3px;width:22px;height:390.7px;background:#e1e1e1"></div><div style="left:0px;top:195.3px;width:22px;height:17.55px;background:#fff"></div><div style="left:22px;top:195.3px;width:1079.3px;height:17.55px;background:#fff"></div><div style="left:22px;top:194.5px;width:1079.3px;height:1.7px;background:#2a6a4a"></div><div style="left:22px;top:212.85000000000002px;width:1079.3px;height:373.15px;background:#c7c7c7"></div><div style="left:93px;top:212.85000000000002px;width:302.5px;height:17.55px;background:#ffeb0a"></div><div style="left:93px;top:230.4px;width:302.5px;height:105.30000000000001px;background:#cbbb12"></div><div style="left:0px;top:212.35000000000002px;width:22px;height:1px;background:#cfcfcf"></div><div style="left:22px;top:212.35000000000002px;width:1079.3px;height:1px;background:#b5b5b5"></div><div style="left:0px;top:229.9px;width:22px;height:1px;background:#cfcfcf"></div><div style="left:22px;top:229.9px;width:1079.3px;height:1px;background:#b5b5b5"></div><div style="left:0px;top:247.45000000000002px;width:22px;height:1px;background:#cfcfcf"></div><div style="left:22px;top:247.45000000000002px;width:1079.3px;height:1px;background:#b5b5b5"></div><div style="left:0px;top:265.0px;width:22px;height:1px;background:#cfcfcf"></div><div style="left:22px;top:265.0px;width:1079.3px;height:1px;background:#b5b5b5"></div><div style="left:0px;top:282.55px;width:22px;height:1px;background:#cfcfcf"></div><div style="left:22px;top:282.55px;width:1079.3px;height:1px;background:#b5b5b5"></div><div style="left:0px;top:300.1px;width:22px;height:1px;background:#cfcfcf"></div><div style="left:22px;top:300.1px;width:1079.3px;height:1px;background:#b5b5b5"></div><div style="left:0px;top:317.65000000000003px;width:22px;height:1px;background:#cfcfcf"></div><div style="left:22px;top:317.65000000000003px;width:1079.3px;height:1px;background:#b5b5b5"></div><div style="left:0px;top:335.20000000000005px;width:22px;height:1px;background:#cfcfcf"></div><div style="left:22px;top:335.20000000000005px;width:1079.3px;height:1px;background:#b5b5b5"></div><div style="left:0px;top:352.75px;width:22px;height:1px;background:#cfcfcf"></div><div style="left:22px;top:352.75px;width:1079.3px;height:1px;background:#b5b5b5"></div><div style="left:0px;top:370.3px;width:22px;height:1px;background:#cfcfcf"></div><div style="left:22px;top:370.3px;width:1079.3px;height:1px;background:#b5b5b5"></div><div style="left:0px;top:387.85px;width:22px;height:1px;background:#cfcfcf"></div><div style="left:22px;top:387.85px;width:1079.3px;height:1px;background:#b5b5b5"></div><div style="left:0px;top:405.40000000000003px;width:22px;height:1px;background:#cfcfcf"></div><div style="left:22px;top:405.40000000000003px;width:1079.3px;height:1px;background:#b5b5b5"></div><div style="left:0px;top:422.95000000000005px;width:22px;height:1px;background:#cfcfcf"></div><div style="left:22px;top:422.95000000000005px;width:1079.3px;height:1px;background:#b5b5b5"></div><div style="left:0px;top:440.5px;width:22px;height:1px;background:#cfcfcf"></div><div style="left:22px;top:440.5px;width:1079.3px;height:1px;background:#b5b5b5"></div><div style="left:0px;top:458.05px;width:22px;height:1px;background:#cfcfcf"></div><div style="left:22px;top:458.05px;width:1079.3px;height:1px;background:#b5b5b5"></div><div style="left:0px;top:475.6px;width:22px;height:1px;background:#cfcfcf"></div><div style="left:22px;top:475.6px;width:1079.3px;height:1px;background:#b5b5b5"></div><div style="left:0px;top:493.15000000000003px;width:22px;height:1px;background:#cfcfcf"></div><div style="left:22px;top:493.15000000000003px;width:1079.3px;height:1px;background:#b5b5b5"></div><div style="left:0px;top:510.70000000000005px;width:22px;height:1px;background:#cfcfcf"></div><div style="left:22px;top:510.70000000000005px;width:1079.3px;height:1px;background:#b5b5b5"></div><div style="left:0px;top:528.25px;width:22px;height:1px;background:#cfcfcf"></div><div style="left:22px;top:528.25px;width:1079.3px;height:1px;background:#b5b5b5"></div><div style="left:0px;top:545.8px;width:22px;height:1px;background:#cfcfcf"></div><div style="left:22px;top:545.8px;width:1079.3px;height:1px;background:#b5b5b5"></div><div style="left:0px;top:563.35px;width:22px;height:1px;background:#cfcfcf"></div><div style="left:22px;top:563.35px;width:1079.3px;height:1px;background:#b5b5b5"></div><div style="left:0px;top:580.9000000000001px;width:22px;height:1px;background:#cfcfcf"></div><div style="left:22px;top:580.9000000000001px;width:1079.3px;height:1px;background:#b5b5b5"></div><div style="left:0px;top:212.35000000000002px;width:22px;height:1px;background:#cfcfcf"></div><div style="left:92.5px;top:212.85000000000002px;width:1px;height:373.15px;background:#b5b5b5"></div><div style="left:92.5px;top:195.3px;width:1px;height:17.55px;background:#d4d4d4"></div><div style="left:395.0px;top:212.85000000000002px;width:1px;height:373.15px;background:#b5b5b5"></div><div style="left:395.0px;top:195.3px;width:1px;height:17.55px;background:#d4d4d4"></div><div style="left:579.0px;top:212.85000000000002px;width:1px;height:373.15px;background:#b5b5b5"></div><div style="left:579.0px;top:195.3px;width:1px;height:17.55px;background:#d4d4d4"></div><div style="left:792.5px;top:212.85000000000002px;width:1px;height:373.15px;background:#b5b5b5"></div><div style="left:792.5px;top:195.3px;width:1px;height:17.55px;background:#d4d4d4"></div><div style="left:861.5px;top:212.85000000000002px;width:1px;height:373.15px;background:#b5b5b5"></div><div style="left:861.5px;top:195.3px;width:1px;height:17.55px;background:#d4d4d4"></div><div style="left:1019.5px;top:212.85000000000002px;width:1px;height:373.15px;background:#b5b5b5"></div><div style="left:1019.5px;top:195.3px;width:1px;height:17.55px;background:#d4d4d4"></div><div style="left:1089.5px;top:212.85000000000002px;width:1px;height:373.15px;background:#b5b5b5"></div><div style="left:1089.5px;top:195.3px;width:1px;height:17.55px;background:#d4d4d4"></div><div style="left:93.5px;top:213.35000000000002px;width:301.5px;height:17.05px;background:#ffeb0a"></div><div style="left:93.5px;top:229.9px;width:301.5px;height:105.30000000000001px;background:#cbbb12"></div><div class="t" style="left:-188.7px;width:400px;text-align:center;top:201.52px;font-size:10.8px;line-height:10.8px;color:#222;">1</div><div class="t" style="left:-188.7px;width:400px;text-align:center;top:219.07px;font-size:10.8px;line-height:10.8px;color:#3b7d55;">2</div><div class="t" style="left:-188.7px;width:400px;text-align:center;top:236.62px;font-size:10.8px;line-height:10.8px;color:#3b7d55;">3</div><div class="t" style="left:-188.7px;width:400px;text-align:center;top:254.17px;font-size:10.8px;line-height:10.8px;color:#3b7d55;">4</div><div class="t" style="left:-188.7px;width:400px;text-align:center;top:271.72px;font-size:10.8px;line-height:10.8px;color:#3b7d55;">5</div><div class="t" style="left:-188.7px;width:400px;text-align:center;top:289.27px;font-size:10.8px;line-height:10.8px;color:#3b7d55;">6</div><div class="t" style="left:-188.7px;width:400px;text-align:center;top:306.82px;font-size:10.8px;line-height:10.8px;color:#3b7d55;">7</div><div class="t" style="left:-188.7px;width:400px;text-align:center;top:324.37px;font-size:10.8px;line-height:10.8px;color:#3b7d55;">8</div><div class="t" style="left:-188.7px;width:400px;text-align:center;top:341.92px;font-size:10.8px;line-height:10.8px;color:#3b7d55;">9</div><div class="t" style="left:-188.7px;width:400px;text-align:center;top:359.47px;font-size:10.8px;line-height:10.8px;color:#3b7d55;">10</div><div class="t" style="left:-188.7px;width:400px;text-align:center;top:377.02px;font-size:10.8px;line-height:10.8px;color:#3b7d55;">11</div><div class="t" style="left:-188.7px;width:400px;text-align:center;top:394.57px;font-size:10.8px;line-height:10.8px;color:#3b7d55;">12</div><div class="t" style="left:-188.7px;width:400px;text-align:center;top:412.12px;font-size:10.8px;line-height:10.8px;color:#3b7d55;">13</div><div class="t" style="left:-188.7px;width:400px;text-align:center;top:429.67px;font-size:10.8px;line-height:10.8px;color:#3b7d55;">14</div><div class="t" style="left:-188.7px;width:400px;text-align:center;top:447.22px;font-size:10.8px;line-height:10.8px;color:#3b7d55;">15</div><div class="t" style="left:-188.7px;width:400px;text-align:center;top:464.77px;font-size:10.8px;line-height:10.8px;color:#3b7d55;">16</div><div class="t" style="left:-188.7px;width:400px;text-align:center;top:482.32px;font-size:10.8px;line-height:10.8px;color:#3b7d55;">17</div><div class="t" style="left:-188.7px;width:400px;text-align:center;top:499.87px;font-size:10.8px;line-height:10.8px;color:#3b7d55;">18</div><div class="t" style="left:-188.7px;width:400px;text-align:center;top:517.42px;font-size:10.8px;line-height:10.8px;color:#3b7d55;">19</div><div class="t" style="left:-188.7px;width:400px;text-align:center;top:534.97px;font-size:10.8px;line-height:10.8px;color:#3b7d55;">20</div><div class="t" style="left:-188.7px;width:400px;text-align:center;top:552.52px;font-size:10.8px;line-height:10.8px;color:#3b7d55;">21</div><div class="t" style="left:-188.7px;width:400px;text-align:center;top:570.07px;font-size:10.8px;line-height:10.8px;color:#3b7d55;">22</div><div class="t" style="left:24.5px;top:196.41px;width:68px;overflow:hidden;font-size:11.6px;line-height:17.55px;color:#222;letter-spacing:0.25px">Nom</div><div class="t" style="left:95.5px;top:196.41px;width:299.5px;overflow:hidden;font-size:11.6px;line-height:17.55px;color:#222;letter-spacing:0.25px">Mail</div><div class="t" style="left:398.0px;top:196.41px;width:181.0px;overflow:hidden;font-size:11.6px;line-height:17.55px;color:#222;letter-spacing:0.25px">Entreprise</div><div class="t" style="left:582.0px;top:196.41px;width:210.5px;overflow:hidden;font-size:11.6px;line-height:17.55px;color:#222;letter-spacing:0.25px">Adresse</div><div class="t" style="left:795.5px;top:196.41px;width:66px;overflow:hidden;font-size:11.6px;line-height:17.55px;color:#222;letter-spacing:0.25px">Code postal</div><div class="t" style="left:864.5px;top:196.41px;width:155px;overflow:hidden;font-size:11.6px;line-height:17.55px;color:#222;letter-spacing:0.25px">Ville</div><div class="t" style="left:1022.5px;top:196.41px;width:67px;overflow:hidden;font-size:11.6px;line-height:17.55px;color:#222;letter-spacing:0.25px">Prénom</div><div class="t" style="left:1092px;top:196.41px;width:9.299999999999955px;overflow:hidden;font-size:11.6px;line-height:17.55px;color:#222;letter-spacing:-0.6px">Salaire</div><div class="t" style="left:24.5px;top:213.96px;width:68px;overflow:hidden;font-size:11.6px;line-height:17.55px;color:#222;letter-spacing:0.25px">Raymond</div><div class="t" style="left:95.5px;top:213.96px;width:299.5px;overflow:hidden;font-size:11.6px;line-height:17.55px;color:#f07818;letter-spacing:0.25px">Aliquam.ultrices@egestasSed.com</div><div class="t" style="left:398.0px;top:213.96px;width:181.0px;overflow:hidden;font-size:11.6px;line-height:17.55px;color:#222;letter-spacing:0.25px">At Fringilla Purus Institute</div><div class="t" style="left:582.0px;top:213.96px;width:210.5px;overflow:hidden;font-size:11.6px;line-height:17.55px;color:#222;letter-spacing:0.25px">9915 Nibh Rd.</div><div class="t" style="right:260.5px;top:216.89px;font-size:11.6px;line-height:11.6px;color:#222;letter-spacing:-0.35px">81684</div><div class="t" style="left:864.5px;top:213.96px;width:155px;overflow:hidden;font-size:11.6px;line-height:17.55px;color:#222;letter-spacing:0.25px">Sankt Johann im Pongau</div><div class="t" style="left:1022.5px;top:213.96px;width:67px;overflow:hidden;font-size:11.6px;line-height:17.55px;color:#222;letter-spacing:0.25px">Kennedy</div><div class="t" style="left:24.5px;top:231.51px;width:68px;overflow:hidden;font-size:11.6px;line-height:17.55px;color:#222;letter-spacing:0.25px">Robles</div><div class="t" style="left:95.5px;top:231.51px;width:299.5px;overflow:hidden;font-size:11.6px;line-height:17.55px;color:#c45a0c;letter-spacing:0.25px">libero.at.auctor@sem.org</div><div class="t" style="left:398.0px;top:231.51px;width:181.0px;overflow:hidden;font-size:11.6px;line-height:17.55px;color:#222;letter-spacing:0.25px">At Fringilla Purus Institute</div><div class="t" style="left:582.0px;top:231.51px;width:210.5px;overflow:hidden;font-size:11.6px;line-height:17.55px;color:#222;letter-spacing:0.25px">Ap #427-8755 Metus. St.</div><div class="t" style="right:260.5px;top:234.44px;font-size:11.6px;line-height:11.6px;color:#222;letter-spacing:-0.35px">10067</div><div class="t" style="left:864.5px;top:231.51px;width:155px;overflow:hidden;font-size:11.6px;line-height:17.55px;color:#222;letter-spacing:0.25px">Gap</div><div class="t" style="left:1022.5px;top:231.51px;width:67px;overflow:hidden;font-size:11.6px;line-height:17.55px;color:#222;letter-spacing:0.25px">TaShya</div><div class="t" style="left:24.5px;top:249.06px;width:68px;overflow:hidden;font-size:11.6px;line-height:17.55px;color:#222;letter-spacing:0.25px">Perkins</div><div class="t" style="left:95.5px;top:249.06px;width:299.5px;overflow:hidden;font-size:11.6px;line-height:17.55px;color:#222;letter-spacing:0.25px">sit.amet@odio.com</div><div class="t" style="left:398.0px;top:249.06px;width:181.0px;overflow:hidden;font-size:11.6px;line-height:17.55px;color:#222;letter-spacing:0.25px">Vel Lectus Company</div><div class="t" style="left:582.0px;top:249.06px;width:210.5px;overflow:hidden;font-size:11.6px;line-height:17.55px;color:#222;letter-spacing:0.25px">P.O. Box 312, 5881 Nunc Rd.</div><div class="t" style="right:260.5px;top:251.99px;font-size:11.6px;line-height:11.6px;color:#222;letter-spacing:-0.35px">36839</div><div class="t" style="left:864.5px;top:249.06px;width:155px;overflow:hidden;font-size:11.6px;line-height:17.55px;color:#222;letter-spacing:0.25px">Sorgà</div><div class="t" style="left:1022.5px;top:249.06px;width:67px;overflow:hidden;font-size:11.6px;line-height:17.55px;color:#222;letter-spacing:0.25px">Aurelia</div><div class="t" style="left:24.5px;top:266.61px;width:68px;overflow:hidden;font-size:11.6px;line-height:17.55px;color:#222;letter-spacing:0.25px">Pope</div><div class="t" style="left:95.5px;top:266.61px;width:299.5px;overflow:hidden;font-size:11.6px;line-height:17.55px;color:#222;letter-spacing:0.25px">luctus@quispede.ca</div><div class="t" style="left:398.0px;top:266.61px;width:181.0px;overflow:hidden;font-size:11.6px;line-height:17.55px;color:#222;letter-spacing:0.25px">Suscipit Est Ac PC</div><div class="t" style="left:582.0px;top:266.61px;width:210.5px;overflow:hidden;font-size:11.6px;line-height:17.55px;color:#222;letter-spacing:0.25px">Ap #585-1830 Erat St.</div><div class="t" style="right:260.5px;top:269.54px;font-size:11.6px;line-height:11.6px;color:#222;letter-spacing:-0.35px">52791</div><div class="t" style="left:864.5px;top:266.61px;width:155px;overflow:hidden;font-size:11.6px;line-height:17.55px;color:#222;letter-spacing:0.25px">Arnhem</div><div class="t" style="left:1022.5px;top:266.61px;width:67px;overflow:hidden;font-size:11.6px;line-height:17.55px;color:#222;letter-spacing:0.25px">Jade</div><div class="t" style="left:24.5px;top:284.16px;width:68px;overflow:hidden;font-size:11.6px;line-height:17.55px;color:#222;letter-spacing:0.25px">Ramirez</div><div class="t" style="left:95.5px;top:284.16px;width:299.5px;overflow:hidden;font-size:11.6px;line-height:17.55px;color:#222;letter-spacing:0.25px">Pellentesque.habitant@nunc.org</div><div class="t" style="left:398.0px;top:284.16px;width:181.0px;overflow:hidden;font-size:11.6px;line-height:17.55px;color:#222;letter-spacing:0.25px">Ut LLC</div><div class="t" style="left:582.0px;top:284.16px;width:210.5px;overflow:hidden;font-size:11.6px;line-height:17.55px;color:#222;letter-spacing:0.25px">8241 Magna Avenue</div><div class="t" style="right:260.5px;top:287.09px;font-size:11.6px;line-height:11.6px;color:#222;letter-spacing:-0.35px">15302</div><div class="t" style="left:864.5px;top:284.16px;width:155px;overflow:hidden;font-size:11.6px;line-height:17.55px;color:#222;letter-spacing:0.25px">Kufstein</div><div class="t" style="left:1022.5px;top:284.16px;width:67px;overflow:hidden;font-size:11.6px;line-height:17.55px;color:#222;letter-spacing:0.25px">Jordan</div><div class="t" style="left:24.5px;top:301.71px;width:68px;overflow:hidden;font-size:11.6px;line-height:17.55px;color:#222;letter-spacing:0.25px">Riley</div><div class="t" style="left:95.5px;top:301.71px;width:299.5px;overflow:hidden;font-size:11.6px;line-height:17.55px;color:#222;letter-spacing:0.25px">porttitor.tellus@ante.net</div><div class="t" style="left:398.0px;top:301.71px;width:181.0px;overflow:hidden;font-size:11.6px;line-height:17.55px;color:#222;letter-spacing:0.25px">At Fringilla Purus Institute</div><div class="t" style="left:582.0px;top:301.71px;width:210.5px;overflow:hidden;font-size:11.6px;line-height:17.55px;color:#222;letter-spacing:0.25px">540-3466 Nibh Street</div><div class="t" style="right:260.5px;top:304.64px;font-size:11.6px;line-height:11.6px;color:#222;letter-spacing:-0.35px">49413</div><div class="t" style="left:864.5px;top:301.71px;width:155px;overflow:hidden;font-size:11.6px;line-height:17.55px;color:#222;letter-spacing:0.25px">Vertou</div><div class="t" style="left:1022.5px;top:301.71px;width:67px;overflow:hidden;font-size:11.6px;line-height:17.55px;color:#222;letter-spacing:0.25px">Bradley</div><div class="t" style="left:24.5px;top:319.26px;width:68px;overflow:hidden;font-size:11.6px;line-height:17.55px;color:#222;letter-spacing:0.25px">Russell</div><div class="t" style="left:95.5px;top:319.26px;width:299.5px;overflow:hidden;font-size:11.6px;line-height:17.55px;color:#222;letter-spacing:0.25px">nunc@fringillaporttitor.co.uk</div><div class="t" style="left:398.0px;top:319.26px;width:181.0px;overflow:hidden;font-size:11.6px;line-height:17.55px;color:#222;letter-spacing:0.25px">Vel Lectus Company</div><div class="t" style="left:582.0px;top:319.26px;width:210.5px;overflow:hidden;font-size:11.6px;line-height:17.55px;color:#222;letter-spacing:0.25px">Ap #922-9921 Lorem Av.</div><div class="t" style="right:260.5px;top:322.19px;font-size:11.6px;line-height:11.6px;color:#222;letter-spacing:-0.35px">25190</div><div class="t" style="left:864.5px;top:319.26px;width:155px;overflow:hidden;font-size:11.6px;line-height:17.55px;color:#222;letter-spacing:0.25px">Northumberland</div><div class="t" style="left:1022.5px;top:319.26px;width:67px;overflow:hidden;font-size:11.6px;line-height:17.55px;color:#222;letter-spacing:0.25px">Prescott</div><div class="t" style="left:24.5px;top:336.81px;width:68px;overflow:hidden;font-size:11.6px;line-height:17.55px;color:#222;letter-spacing:0.25px">Price</div><div class="t" style="left:95.5px;top:336.81px;width:299.5px;overflow:hidden;font-size:11.6px;line-height:17.55px;color:#d83c36;letter-spacing:0.25px">adipiscing.fringilla@porta.com</div><div class="t" style="left:398.0px;top:336.81px;width:181.0px;overflow:hidden;font-size:11.6px;line-height:17.55px;color:#222;letter-spacing:0.25px">Suscipit Est Ac PC</div><div class="t" style="left:582.0px;top:336.81px;width:210.5px;overflow:hidden;font-size:11.6px;line-height:17.55px;color:#222;letter-spacing:0.25px">3366 Auctor Road</div><div class="t" style="right:260.5px;top:339.74px;font-size:11.6px;line-height:11.6px;color:#222;letter-spacing:-0.35px">91008</div><div class="t" style="left:864.5px;top:336.81px;width:155px;overflow:hidden;font-size:11.6px;line-height:17.55px;color:#222;letter-spacing:0.25px">Wagnelže</div><div class="t" style="left:1022.5px;top:336.81px;width:67px;overflow:hidden;font-size:11.6px;line-height:17.55px;color:#222;letter-spacing:0.25px">Zeus</div><div class="t" style="left:24.5px;top:354.36px;width:68px;overflow:hidden;font-size:11.6px;line-height:17.55px;color:#222;letter-spacing:0.25px">Rasmussen</div><div class="t" style="left:95.5px;top:354.36px;width:299.5px;overflow:hidden;font-size:11.6px;line-height:17.55px;color:#d83c36;letter-spacing:0.25px">dis.parturient.montes@lorem.edu</div><div class="t" style="left:398.0px;top:354.36px;width:181.0px;overflow:hidden;font-size:11.6px;line-height:17.55px;color:#222;letter-spacing:0.25px">Ut LLC</div><div class="t" style="left:582.0px;top:354.36px;width:210.5px;overflow:hidden;font-size:11.6px;line-height:17.55px;color:#222;letter-spacing:0.25px">P.O. Box 471, 2187 Sed Rd.</div><div class="t" style="right:260.5px;top:357.29px;font-size:11.6px;line-height:11.6px;color:#222;letter-spacing:-0.35px">68083</div><div class="t" style="left:864.5px;top:354.36px;width:155px;overflow:hidden;font-size:11.6px;line-height:17.55px;color:#222;letter-spacing:0.25px">Seattle</div><div class="t" style="left:1022.5px;top:354.36px;width:67px;overflow:hidden;font-size:11.6px;line-height:17.55px;color:#222;letter-spacing:0.25px">Ginger</div><div class="t" style="left:24.5px;top:371.91px;width:68px;overflow:hidden;font-size:11.6px;line-height:17.55px;color:#222;letter-spacing:0.25px">Roach</div><div class="t" style="left:95.5px;top:371.91px;width:299.5px;overflow:hidden;font-size:11.6px;line-height:17.55px;color:#d83c36;letter-spacing:0.25px">Cum.sociis@praesent.ca</div><div class="t" style="left:398.0px;top:371.91px;width:181.0px;overflow:hidden;font-size:11.6px;line-height:17.55px;color:#222;letter-spacing:0.25px">At Fringilla Purus Institute</div><div class="t" style="left:582.0px;top:371.91px;width:210.5px;overflow:hidden;font-size:11.6px;line-height:17.55px;color:#222;letter-spacing:0.25px">6547 Cursus Street</div><div class="t" style="right:260.5px;top:374.84px;font-size:11.6px;line-height:11.6px;color:#222;letter-spacing:-0.35px">60087</div><div class="t" style="left:864.5px;top:371.91px;width:155px;overflow:hidden;font-size:11.6px;line-height:17.55px;color:#222;letter-spacing:0.25px">Pinneberg</div><div class="t" style="left:1022.5px;top:371.91px;width:67px;overflow:hidden;font-size:11.6px;line-height:17.55px;color:#222;letter-spacing:0.25px">Venus</div><div class="t" style="left:24.5px;top:389.46px;width:68px;overflow:hidden;font-size:11.6px;line-height:17.55px;color:#222;letter-spacing:0.25px">Peters</div><div class="t" style="left:95.5px;top:389.46px;width:299.5px;overflow:hidden;font-size:11.6px;line-height:17.55px;color:#222;letter-spacing:0.25px">consectetuer.adipiscing@elit.org</div><div class="t" style="left:398.0px;top:389.46px;width:181.0px;overflow:hidden;font-size:11.6px;line-height:17.55px;color:#222;letter-spacing:0.25px">Vel Lectus Company</div><div class="t" style="left:582.0px;top:389.46px;width:210.5px;overflow:hidden;font-size:11.6px;line-height:17.55px;color:#222;letter-spacing:0.25px">741-8421 Nulla Ave</div><div class="t" style="right:260.5px;top:392.39px;font-size:11.6px;line-height:11.6px;color:#222;letter-spacing:-0.35px">31486</div><div class="t" style="left:864.5px;top:389.46px;width:155px;overflow:hidden;font-size:11.6px;line-height:17.55px;color:#222;letter-spacing:0.25px">Caplan</div><div class="t" style="left:1022.5px;top:389.46px;width:67px;overflow:hidden;font-size:11.6px;line-height:17.55px;color:#222;letter-spacing:0.25px">Finn</div><div class="t" style="left:24.5px;top:407.01px;width:68px;overflow:hidden;font-size:11.6px;line-height:17.55px;color:#222;letter-spacing:0.25px">Petty</div><div class="t" style="left:95.5px;top:407.01px;width:299.5px;overflow:hidden;font-size:11.6px;line-height:17.55px;color:#222;letter-spacing:0.25px">commodo.ipsum@vitae.net</div><div class="t" style="left:398.0px;top:407.01px;width:181.0px;overflow:hidden;font-size:11.6px;line-height:17.55px;color:#222;letter-spacing:0.25px">Ut LLC</div><div class="t" style="left:582.0px;top:407.01px;width:210.5px;overflow:hidden;font-size:11.6px;line-height:17.55px;color:#222;letter-spacing:0.25px">Ap #305-4412 Ac Road</div><div class="t" style="right:260.5px;top:409.94px;font-size:11.6px;line-height:11.6px;color:#222;letter-spacing:-0.35px">33071</div><div class="t" style="left:864.5px;top:407.01px;width:155px;overflow:hidden;font-size:11.6px;line-height:17.55px;color:#222;letter-spacing:0.25px">Cannalonga</div><div class="t" style="left:1022.5px;top:407.01px;width:67px;overflow:hidden;font-size:11.6px;line-height:17.55px;color:#222;letter-spacing:0.25px">Vladimir</div><div class="t" style="left:24.5px;top:424.56px;width:68px;overflow:hidden;font-size:11.6px;line-height:17.55px;color:#222;letter-spacing:0.25px">Phillips</div><div class="t" style="left:95.5px;top:424.56px;width:299.5px;overflow:hidden;font-size:11.6px;line-height:17.55px;color:#222;letter-spacing:0.25px">ut.sem.Nulla@mauris.com</div><div class="t" style="left:398.0px;top:424.56px;width:181.0px;overflow:hidden;font-size:11.6px;line-height:17.55px;color:#222;letter-spacing:0.25px">Suscipit Est Ac PC</div><div class="t" style="left:582.0px;top:424.56px;width:210.5px;overflow:hidden;font-size:11.6px;line-height:17.55px;color:#222;letter-spacing:0.25px">9016 Donec Street</div><div class="t" style="right:260.5px;top:427.49px;font-size:11.6px;line-height:11.6px;color:#222;letter-spacing:-0.35px">84436</div><div class="t" style="left:864.5px;top:424.56px;width:155px;overflow:hidden;font-size:11.6px;line-height:17.55px;color:#222;letter-spacing:0.25px">Carleton</div><div class="t" style="left:1022.5px;top:424.56px;width:67px;overflow:hidden;font-size:11.6px;line-height:17.55px;color:#222;letter-spacing:0.25px">Elliott</div><div class="t" style="left:24.5px;top:442.11px;width:68px;overflow:hidden;font-size:11.6px;line-height:17.55px;color:#222;letter-spacing:0.25px">Pollard</div><div class="t" style="left:95.5px;top:442.11px;width:299.5px;overflow:hidden;font-size:11.6px;line-height:17.55px;color:#222;letter-spacing:0.25px">vulputate.dui@nisi.edu</div><div class="t" style="left:398.0px;top:442.11px;width:181.0px;overflow:hidden;font-size:11.6px;line-height:17.55px;color:#222;letter-spacing:0.25px">At Fringilla Purus Institute</div><div class="t" style="left:582.0px;top:442.11px;width:210.5px;overflow:hidden;font-size:11.6px;line-height:17.55px;color:#222;letter-spacing:0.25px">1130 Felis Rd.</div><div class="t" style="right:260.5px;top:445.04px;font-size:11.6px;line-height:11.6px;color:#222;letter-spacing:-0.35px">64665</div><div class="t" style="left:864.5px;top:442.11px;width:155px;overflow:hidden;font-size:11.6px;line-height:17.55px;color:#222;letter-spacing:0.25px">Pelluhue</div><div class="t" style="left:1022.5px;top:442.11px;width:67px;overflow:hidden;font-size:11.6px;line-height:17.55px;color:#222;letter-spacing:0.25px">Rudyard</div><div class="t" style="left:24.5px;top:459.66px;width:68px;overflow:hidden;font-size:11.6px;line-height:17.55px;color:#222;letter-spacing:0.25px">Poole</div><div class="t" style="left:95.5px;top:459.66px;width:299.5px;overflow:hidden;font-size:11.6px;line-height:17.55px;color:#222;letter-spacing:0.25px">adipiscing@nonummy.org</div><div class="t" style="left:398.0px;top:459.66px;width:181.0px;overflow:hidden;font-size:11.6px;line-height:17.55px;color:#222;letter-spacing:0.25px">Vel Lectus Company</div><div class="t" style="left:582.0px;top:459.66px;width:210.5px;overflow:hidden;font-size:11.6px;line-height:17.55px;color:#222;letter-spacing:0.25px">P.O. Box 204, 8320 Ut Av.</div><div class="t" style="right:260.5px;top:462.59px;font-size:11.6px;line-height:11.6px;color:#222;letter-spacing:-0.35px">90591</div><div class="t" style="left:864.5px;top:459.66px;width:155px;overflow:hidden;font-size:11.6px;line-height:17.55px;color:#222;letter-spacing:0.25px">Elgin</div><div class="t" style="left:1022.5px;top:459.66px;width:67px;overflow:hidden;font-size:11.6px;line-height:17.55px;color:#222;letter-spacing:0.25px">Acton</div><div class="t" style="left:24.5px;top:477.21px;width:68px;overflow:hidden;font-size:11.6px;line-height:17.55px;color:#222;letter-spacing:0.25px">Pope</div><div class="t" style="left:95.5px;top:477.21px;width:299.5px;overflow:hidden;font-size:11.6px;line-height:17.55px;color:#222;letter-spacing:0.25px">dolor.Fusce.feugiat@tortoratrisus.net</div><div class="t" style="left:398.0px;top:477.21px;width:181.0px;overflow:hidden;font-size:11.6px;line-height:17.55px;color:#222;letter-spacing:0.25px">Vel Lectus Company</div><div class="t" style="left:582.0px;top:477.21px;width:210.5px;overflow:hidden;font-size:11.6px;line-height:17.55px;color:#222;letter-spacing:0.25px">P.O. Box 867, 4703 Velit Avenue</div><div class="t" style="right:260.5px;top:480.14px;font-size:11.6px;line-height:11.6px;color:#222;letter-spacing:-0.35px">90958</div><div class="t" style="left:864.5px;top:477.21px;width:155px;overflow:hidden;font-size:11.6px;line-height:17.55px;color:#222;letter-spacing:0.25px">Pichilemu</div><div class="t" style="left:1022.5px;top:477.21px;width:67px;overflow:hidden;font-size:11.6px;line-height:17.55px;color:#222;letter-spacing:0.25px">Kai</div><div class="t" style="left:24.5px;top:494.76px;width:68px;overflow:hidden;font-size:11.6px;line-height:17.55px;color:#222;letter-spacing:0.25px">Preston</div><div class="t" style="left:95.5px;top:494.76px;width:299.5px;overflow:hidden;font-size:11.6px;line-height:17.55px;color:#222;letter-spacing:0.25px">Integer.urna.Vivamus@laciniaSedcongue.ca</div><div class="t" style="left:398.0px;top:494.76px;width:181.0px;overflow:hidden;font-size:11.6px;line-height:17.55px;color:#222;letter-spacing:0.25px">Suscipit Est Ac PC</div><div class="t" style="left:582.0px;top:494.76px;width:210.5px;overflow:hidden;font-size:11.6px;line-height:17.55px;color:#222;letter-spacing:0.25px">Ap #672-6309 Eget Street</div><div class="t" style="right:260.5px;top:497.69px;font-size:11.6px;line-height:11.6px;color:#222;letter-spacing:-0.35px">19867</div><div class="t" style="left:864.5px;top:494.76px;width:155px;overflow:hidden;font-size:11.6px;line-height:17.55px;color:#222;letter-spacing:0.25px">Overrepen</div><div class="t" style="left:1022.5px;top:494.76px;width:67px;overflow:hidden;font-size:11.6px;line-height:17.55px;color:#222;letter-spacing:0.25px">Alfonso</div><div class="t" style="left:24.5px;top:512.31px;width:68px;overflow:hidden;font-size:11.6px;line-height:17.55px;color:#222;letter-spacing:0.25px">Preston</div><div class="t" style="left:95.5px;top:512.31px;width:299.5px;overflow:hidden;font-size:11.6px;line-height:17.55px;color:#222;letter-spacing:0.25px">faucibus@ante.co.uk</div><div class="t" style="left:398.0px;top:512.31px;width:181.0px;overflow:hidden;font-size:11.6px;line-height:17.55px;color:#222;letter-spacing:0.25px">At Fringilla Purus Institute</div><div class="t" style="left:582.0px;top:512.31px;width:210.5px;overflow:hidden;font-size:11.6px;line-height:17.55px;color:#222;letter-spacing:0.25px">3369 Sagittis. Ave</div><div class="t" style="right:260.5px;top:515.24px;font-size:11.6px;line-height:11.6px;color:#222;letter-spacing:-0.35px">75713</div><div class="t" style="left:864.5px;top:512.31px;width:155px;overflow:hidden;font-size:11.6px;line-height:17.55px;color:#222;letter-spacing:0.25px">Greater Sudbury</div><div class="t" style="left:1022.5px;top:512.31px;width:67px;overflow:hidden;font-size:11.6px;line-height:17.55px;color:#222;letter-spacing:0.25px">Serena</div><div class="t" style="left:24.5px;top:529.86px;width:68px;overflow:hidden;font-size:11.6px;line-height:17.55px;color:#222;letter-spacing:0.25px">Prince</div><div class="t" style="left:95.5px;top:529.86px;width:299.5px;overflow:hidden;font-size:11.6px;line-height:17.55px;color:#222;letter-spacing:0.25px">risus.Duis@QuisquevariusNam.co.uk</div><div class="t" style="left:398.0px;top:529.86px;width:181.0px;overflow:hidden;font-size:11.6px;line-height:17.55px;color:#222;letter-spacing:0.25px">Ut LLC</div><div class="t" style="left:582.0px;top:529.86px;width:210.5px;overflow:hidden;font-size:11.6px;line-height:17.55px;color:#222;letter-spacing:0.25px">792-1541 Dolor. Road</div><div class="t" style="right:260.5px;top:532.79px;font-size:11.6px;line-height:11.6px;color:#222;letter-spacing:-0.35px">17571</div><div class="t" style="left:864.5px;top:529.86px;width:155px;overflow:hidden;font-size:11.6px;line-height:17.55px;color:#222;letter-spacing:0.25px">Lloydminster</div><div class="t" style="left:1022.5px;top:529.86px;width:67px;overflow:hidden;font-size:11.6px;line-height:17.55px;color:#222;letter-spacing:0.25px">Dolan</div><div class="t" style="left:24.5px;top:547.41px;width:68px;overflow:hidden;font-size:11.6px;line-height:17.55px;color:#222;letter-spacing:0.25px">Quinn</div><div class="t" style="left:95.5px;top:547.41px;width:299.5px;overflow:hidden;font-size:11.6px;line-height:17.55px;color:#222;letter-spacing:0.25px">mauris.aliquam@metusIn.ca</div><div class="t" style="left:398.0px;top:547.41px;width:181.0px;overflow:hidden;font-size:11.6px;line-height:17.55px;color:#222;letter-spacing:0.25px">Ut LLC</div><div class="t" style="left:582.0px;top:547.41px;width:210.5px;overflow:hidden;font-size:11.6px;line-height:17.55px;color:#222;letter-spacing:0.25px">Ap #124-3009 Lacus. Street</div><div class="t" style="right:260.5px;top:550.34px;font-size:11.6px;line-height:11.6px;color:#222;letter-spacing:-0.35px">88408</div><div class="t" style="left:864.5px;top:547.41px;width:155px;overflow:hidden;font-size:11.6px;line-height:17.55px;color:#222;letter-spacing:0.25px">Notre-Dame-du-Nord</div><div class="t" style="left:1022.5px;top:547.41px;width:67px;overflow:hidden;font-size:11.6px;line-height:17.55px;color:#222;letter-spacing:0.25px">Bernard</div><div class="t" style="left:24.5px;top:564.96px;width:68px;overflow:hidden;font-size:11.6px;line-height:17.55px;color:#222;letter-spacing:0.25px">Ramos</div><div class="t" style="left:95.5px;top:564.96px;width:299.5px;overflow:hidden;font-size:11.6px;line-height:17.55px;color:#222;letter-spacing:0.25px">arcu.Sed@semut.ca</div><div class="t" style="left:398.0px;top:564.96px;width:181.0px;overflow:hidden;font-size:11.6px;line-height:17.55px;color:#222;letter-spacing:0.25px">At Fringilla Purus Institute</div><div class="t" style="left:582.0px;top:564.96px;width:210.5px;overflow:hidden;font-size:11.6px;line-height:17.55px;color:#222;letter-spacing:0.25px">1062 Duis St.</div><div class="t" style="right:260.5px;top:567.89px;font-size:11.6px;line-height:11.6px;color:#222;letter-spacing:-0.35px">10502</div><div class="t" style="left:864.5px;top:564.96px;width:155px;overflow:hidden;font-size:11.6px;line-height:17.55px;color:#222;letter-spacing:0.25px">Etawah</div><div class="t" style="left:1022.5px;top:564.96px;width:67px;overflow:hidden;font-size:11.6px;line-height:17.55px;color:#222;letter-spacing:0.25px">Jonah</div><div style="left:1090px;top:212.85000000000002px;width:11.5px;height:373.15px;overflow:hidden"><div style="left:0;top:-212.85000000000002px;width:20px;height:632px"><svg style="position:absolute;left:0;top:211.85px" width="20" height="18"><path d="M7 3.8 L12.8 10.8 L9.9 10.8 L9.9 17.3 L4.5 17.3 L4.5 10.8 L1.3 10.8 Z" fill="#2b7a5b"/></svg><svg style="position:absolute;left:0;top:229.40px" width="20" height="18"><path d="M7 3.8 L12.8 10.8 L9.9 10.8 L9.9 17.3 L4.5 17.3 L4.5 10.8 L1.3 10.8 Z" fill="#2b7a5b"/></svg><svg style="position:absolute;left:0;top:246.95px" width="20" height="18"><path d="M7 3.8 L12.8 10.8 L9.9 10.8 L9.9 17.3 L4.5 17.3 L4.5 10.8 L1.3 10.8 Z" fill="#2b7a5b"/></svg><svg style="position:absolute;left:0;top:264.50px" width="20" height="18"><path d="M7.8 16.8 L14 9.5 L10.8 9.5 L10.8 3.3 L4.5 3.3 L4.5 9.5 L1.5 9.5 Z" fill="#cc4a24"/></svg><svg style="position:absolute;left:0;top:282.05px" width="20" height="18"><path d="M7.8 16.8 L14 9.5 L10.8 9.5 L10.8 3.3 L4.5 3.3 L4.5 9.5 L1.5 9.5 Z" fill="#cc4a24"/></svg><svg style="position:absolute;left:0;top:299.60px" width="20" height="18"><path d="M16 10.2 L5.5 3.8 L5.5 7.8 L1 7.8 L1 12.6 L5.5 12.6 L5.5 16.6 Z" fill="#c8a458"/></svg><svg style="position:absolute;left:0;top:317.15px" width="20" height="18"><path d="M16 10.2 L5.5 3.8 L5.5 7.8 L1 7.8 L1 12.6 L5.5 12.6 L5.5 16.6 Z" fill="#c8a458"/></svg><svg style="position:absolute;left:0;top:334.70px" width="20" height="18"><path d="M16 10.2 L5.5 3.8 L5.5 7.8 L1 7.8 L1 12.6 L5.5 12.6 L5.5 16.6 Z" fill="#c8a458"/></svg><svg style="position:absolute;left:0;top:352.25px" width="20" height="18"><path d="M7.8 16.8 L14 9.5 L10.8 9.5 L10.8 3.3 L4.5 3.3 L4.5 9.5 L1.5 9.5 Z" fill="#cc4a24"/></svg><svg style="position:absolute;left:0;top:369.80px" width="20" height="18"><path d="M7 3.8 L12.8 10.8 L9.9 10.8 L9.9 17.3 L4.5 17.3 L4.5 10.8 L1.3 10.8 Z" fill="#2b7a5b"/></svg><svg style="position:absolute;left:0;top:387.35px" width="20" height="18"><path d="M7.8 16.8 L14 9.5 L10.8 9.5 L10.8 3.3 L4.5 3.3 L4.5 9.5 L1.5 9.5 Z" fill="#cc4a24"/></svg><svg style="position:absolute;left:0;top:404.90px" width="20" height="18"><path d="M7.8 16.8 L14 9.5 L10.8 9.5 L10.8 3.3 L4.5 3.3 L4.5 9.5 L1.5 9.5 Z" fill="#cc4a24"/></svg><svg style="position:absolute;left:0;top:422.45px" width="20" height="18"><path d="M16 10.2 L5.5 3.8 L5.5 7.8 L1 7.8 L1 12.6 L5.5 12.6 L5.5 16.6 Z" fill="#c8a458"/></svg><svg style="position:absolute;left:0;top:440.00px" width="20" height="18"><path d="M16 10.2 L5.5 3.8 L5.5 7.8 L1 7.8 L1 12.6 L5.5 12.6 L5.5 16.6 Z" fill="#c8a458"/></svg><svg style="position:absolute;left:0;top:457.55px" width="20" height="18"><path d="M16 10.2 L5.5 3.8 L5.5 7.8 L1 7.8 L1 12.6 L5.5 12.6 L5.5 16.6 Z" fill="#c8a458"/></svg><svg style="position:absolute;left:0;top:475.10px" width="20" height="18"><path d="M16 10.2 L5.5 3.8 L5.5 7.8 L1 7.8 L1 12.6 L5.5 12.6 L5.5 16.6 Z" fill="#c8a458"/></svg><svg style="position:absolute;left:0;top:492.65px" width="20" height="18"><path d="M7.8 16.8 L14 9.5 L10.8 9.5 L10.8 3.3 L4.5 3.3 L4.5 9.5 L1.5 9.5 Z" fill="#cc4a24"/></svg><svg style="position:absolute;left:0;top:510.20px" width="20" height="18"><path d="M7.8 16.8 L14 9.5 L10.8 9.5 L10.8 3.3 L4.5 3.3 L4.5 9.5 L1.5 9.5 Z" fill="#cc4a24"/></svg><svg style="position:absolute;left:0;top:527.75px" width="20" height="18"><path d="M16 10.2 L5.5 3.8 L5.5 7.8 L1 7.8 L1 12.6 L5.5 12.6 L5.5 16.6 Z" fill="#c8a458"/></svg><svg style="position:absolute;left:0;top:545.30px" width="20" height="18"><path d="M7.8 16.8 L14 9.5 L10.8 9.5 L10.8 3.3 L4.5 3.3 L4.5 9.5 L1.5 9.5 Z" fill="#cc4a24"/></svg><svg style="position:absolute;left:0;top:562.85px" width="20" height="18"><path d="M7 3.8 L12.8 10.8 L9.9 10.8 L9.9 17.3 L4.5 17.3 L4.5 10.8 L1.3 10.8 Z" fill="#2b7a5b"/></svg><svg style="position:absolute;left:0;top:580.40px" width="20" height="18"><path d="M16 10.2 L5.5 3.8 L5.5 7.8 L1 7.8 L1 12.6 L5.5 12.6 L5.5 16.6 Z" fill="#c8a458"/></svg></div></div><div style="left:21px;top:211.85000000000002px;width:2px;height:374.15px;background:#217346"></div><div style="left:22px;top:211.85000000000002px;width:1079.3px;height:2px;background:#217346"></div><div style="left:1101.3px;top:178.5px;width:0.7px;height:407.5px;background:#fff"></div><div style="left:1101.3px;top:178.5px;width:19px;height:407.5px;background:#f5f5f5"></div><div style="left:1104px;top:181px;width:13.5px;height:80px;background:#fff;border:1px solid #cfcfcf;box-sizing:border-box"></div><div style="left:1104px;top:181px;width:13.5px;height:12.5px;border-bottom:1px solid #cfcfcf;box-sizing:border-box"></div><svg style="position:absolute;left:1106px;top:183px;" width="10" height="8" viewBox="0 0 10 8"><path d="M2 6 L5 3 L8 6 Z" fill="#555"/></svg><div style="left:1104px;top:573.5px;width:13.5px;height:12px;background:#fff;border:1px solid #cfcfcf;box-sizing:border-box"></div><svg style="position:absolute;left:1105.8px;top:575.5px;" width="10" height="8" viewBox="0 0 10 8"><path d="M2 2.5 L5 5.5 L8 2.5 Z" fill="#555"/></svg><div style="left:0px;top:586px;width:1119.7px;height:23.600000000000023px;background:#f6f6f6"></div><svg style="position:absolute;left:20px;top:590px;" width="40" height="16" viewBox="0 0 40 16"><path d="M7.5 4.5 L4.5 7.3 L7.5 10 Z" fill="#c4c4c4"/><path d="M29 4.5 L32 7.3 L29 10 Z" fill="#c4c4c4"/></svg><div style="left:87.4px;top:586px;width:53.6px;height:21px;background:#fff;border-left:1px solid #d0d0d0;border-right:1px solid #d0d0d0;box-sizing:border-box"></div><div style="left:87.4px;top:605.9px;width:53.6px;height:1.8px;background:#217346"></div><div class="t" style="left:-85.8px;width:400px;text-align:center;top:592.02px;font-size:10.8px;line-height:10.8px;color:#2f6b4f;font-weight:bold">Feuil1</div><svg style="position:absolute;left:167.6px;top:588.7px;" width="18" height="18" viewBox="0 0 18 18"><circle cx="9" cy="9" r="6.6" fill="none" stroke="#666" stroke-width="1.2"/><path d="M9 5.3 V12.7 M5.3 9 H12.7" stroke="#555" stroke-width="1.4"/></svg><div style="left:687.5px;top:592.5px;width:415.5px;height:12.5px;background:#fff;border:1px solid #cfcfcf;box-sizing:border-box"></div><div style="left:700px;top:592.5px;width:318px;height:12.5px;border-left:1px solid #cfcfcf;border-right:1px solid #cfcfcf;box-sizing:border-box"></div><div style="left:1018px;top:593.5px;width:72.4px;height:10.5px;background:#efefef"></div><svg style="position:absolute;left:689px;top:594px;" width="10" height="10" viewBox="0 0 10 10"><path d="M6 2 L3 5 L6 8 Z" fill="#555"/></svg><svg style="position:absolute;left:1092px;top:594px;" width="10" height="10" viewBox="0 0 10 10"><path d="M4 2 L7 5 L4 8 Z" fill="#555"/></svg><svg style="position:absolute;left:670px;top:592px;" width="6" height="14" viewBox="0 0 6 14"><circle cx="3" cy="3" r="0.9" fill="#999"/><circle cx="3" cy="7" r="0.9" fill="#999"/><circle cx="3" cy="11" r="0.9" fill="#999"/></svg><div style="left:0px;top:609.6px;width:1121px;height:19.6px;background:#217346"></div><div style="left:0px;top:629.2px;width:1121px;height:1.3px;background:#e9c9b8"></div><div style="left:0px;top:630.5px;width:1121px;height:1.5px;background:#7b5548"></div><div class="t" style="left:6.5px;top:615.08px;font-size:10.5px;line-height:10.5px;color:#e6f3ea;">Prêt</div><svg style="position:absolute;left:41px;top:613px;" width="14" height="14" viewBox="0 0 14 14"><rect x="2.5" y="4" width="9" height="8" fill="none" stroke="#e0efe6" stroke-width="1.2"/><circle cx="4" cy="3.5" r="2.3" fill="#e0efe6"/><path d="M5 7 V12 M7.5 7 V12 M10 7 V12" stroke="#e0efe6" stroke-width="0.9"/></svg><div style="left:857px;top:609.6px;width:33px;height:19.6px;background:#1a5e3a"></div><svg style="position:absolute;left:866px;top:613px;" width="15" height="13" viewBox="0 0 15 13"><path d="M1.5 1.5 H13.5 V11.5 H1.5 Z M1.5 4.8 H13.5 M1.5 8.2 H13.5 M5.5 1.5 V11.5 M9.5 1.5 V11.5" fill="none" stroke="#e8f3ec" stroke-width="1"/></svg><svg style="position:absolute;left:900px;top:612px;" width="16" height="15" viewBox="0 0 16 15"><rect x="2.5" y="1.5" width="11" height="12" fill="none" stroke="#e8f3ec" stroke-width="1"/><path d="M5 4.5 H11 M5 7.5 H11 M5 10.5 H11" stroke="#e8f3ec" stroke-width="1"/></svg><svg style="position:absolute;left:933px;top:612px;" width="16" height="15" viewBox="0 0 16 15"><rect x="2" y="2" width="12" height="11" fill="none" stroke="#e8f3ec" stroke-width="1.2"/><rect x="5" y="2" width="6" height="6" fill="#e8f3ec"/></svg><div style="left:963px;top:619px;width:5px;height:1.6px;background:#e8f3ec"></div><div style="left:970px;top:619.2px;width:88px;height:1px;background:#cfe5d6"></div><div style="left:1012.4px;top:614.5px;width:4.3px;height:10px;background:#e8f3ec"></div><svg style="position:absolute;left:1059px;top:615px;" width="9" height="9" viewBox="0 0 9 9"><path d="M4.5 0.5 V8.5 M0.5 4.5 H8.5" stroke="#e8f3ec" stroke-width="1.6"/></svg><div class="t" style="left:1077.6px;top:615.30px;font-size:10px;line-height:10px;color:#e6f3ea;letter-spacing:-0.4px">100 %</div><div style="left:1119.7px;top:0px;width:1.3px;height:632px;background:#6e6e6e"></div><div style="left:181px;top:248.5px;width:651px;height:240.5px;background:rgba(0,0,0,0.05);border-radius:4px"></div><div style="left:179px;top:246.5px;width:649px;height:237.5px;background:rgba(0,0,0,0.06);border-radius:3px"></div><div style="left:177px;top:244.5px;width:646px;height:234.5px;background:#f0f0f0;border:1.5px solid #6d92bd;box-sizing:border-box"></div><div style="left:178px;top:245.5px;width:644px;height:26.0px;background:#fff"></div><div class="t" style="left:185px;top:253.07px;font-size:10.5px;line-height:10.5px;color:#222;">Tri</div><div class="t" style="left:563px;width:400px;text-align:center;top:252.65px;font-size:11px;line-height:11px;color:#333;">?</div><svg style="position:absolute;left:795px;top:251px;" width="14" height="14" viewBox="0 0 14 14"><path d="M2 2 L12 12 M12 2 L2 12" stroke="#333" stroke-width="1.1"/></svg><div style="left:184.3px;top:279px;width:111.39999999999998px;height:20.5px;background:#e1e1e1;border:1px solid #adadad;box-sizing:border-box;"></div><div style="left:300px;top:279px;width:124.39999999999998px;height:20.5px;background:#e1e1e1;border:1px solid #adadad;box-sizing:border-box;"></div><div style="left:429.2px;top:279px;width:107.80000000000001px;height:20.5px;background:#e1e1e1;border:1px solid #adadad;box-sizing:border-box;"></div><div style="left:539px;top:279px;width:1.2px;height:21px;background:#555"></div><div style="left:542.6px;top:279.5px;width:20.699999999999932px;height:19.5px;background:#e1e1e1;border:1px solid #adadad;box-sizing:border-box;"></div><div style="left:567.2px;top:279.5px;width:20.09999999999991px;height:19.5px;background:#e1e1e1;border:1px solid #adadad;box-sizing:border-box;"></div><div style="left:591.7px;top:279.5px;width:60.0px;height:19.5px;background:#e1e1e1;border:1px solid #adadad;box-sizing:border-box;"></div><div class="t" style="left:208px;top:284.75px;font-size:10.3px;line-height:10.3px;color:#222;">Ajouter un niveau</div><div style="left:208.5px;top:295.2px;width:6.5px;height:0.9px;background:#333"></div><div style="left:324px;top:295.2px;width:6px;height:0.9px;background:#333"></div><div style="left:453px;top:295.2px;width:6.5px;height:0.9px;background:#333"></div><div style="left:598.5px;top:295.2px;width:7px;height:0.9px;background:#333"></div><div style="left:794.8px;top:295.2px;width:3px;height:0.9px;background:#333"></div><div class="t" style="left:323.5px;top:284.75px;font-size:10.3px;line-height:10.3px;color:#222;">Supprimer un niveau</div><div class="t" style="left:452.5px;top:284.75px;font-size:10.3px;line-height:10.3px;color:#222;">Copier un niveau</div><div class="t" style="left:598px;top:284.75px;font-size:10.3px;line-height:10.3px;color:#222;">Options...</div><svg style="position:absolute;left:188.5px;top:282px;" width="18" height="15" viewBox="0 0 18 15"><path d="M3 1.5 V6.5 M0.5 4 H5.5" stroke="#3a9a5a" stroke-width="1.4"/><text x="5.8" y="8" font-size="6.5" font-family="Liberation Sans" fill="#4a74b8">A</text><text x="6" y="14" font-size="6.5" font-family="Liberation Sans" fill="#4a74b8">Z</text><path d="M13.5 3 V13 M11.7 11 L13.5 13.3 L15.3 11" stroke="#333" stroke-width="1" fill="none"/></svg><svg style="position:absolute;left:306px;top:282px;" width="16" height="15" viewBox="0 0 16 15"><path d="M2 2 L14 13 M14 2 L2 13" stroke="#333" stroke-width="1.5"/></svg><svg style="position:absolute;left:435px;top:282px;" width="16" height="15" viewBox="0 0 16 15"><rect x="1.5" y="1.5" width="7" height="9" fill="#fff" stroke="#666"/><rect x="6.5" y="4.5" width="8" height="9" fill="#eef3fa" stroke="#555"/><path d="M8.5 7.5 H12.5 M8.5 9.5 H12.5 M8.5 11.5 H12.5" stroke="#6b8fc0" stroke-width="0.8"/></svg><svg style="position:absolute;left:546px;top:282px;" width="14" height="14" viewBox="0 0 14 14"><path d="M3 9.5 L7 5 L11 9.5 Z" fill="#555"/></svg><svg style="position:absolute;left:570px;top:282px;" width="14" height="14" viewBox="0 0 14 14"><path d="M3 5 L7 9.5 L11 5 Z" fill="#555"/></svg><div style="left:660.3px;top:284.2px;width:12px;height:11.5px;background:#fff;border:1px solid #333;box-sizing:border-box"></div><svg style="position:absolute;left:660.3px;top:284.2px;" width="12" height="12" viewBox="0 0 12 12"><path d="M2.5 6 L5 8.5 L9.8 3" fill="none" stroke="#222" stroke-width="1.1"/></svg><div class="t" style="left:678.5px;top:284.75px;font-size:10.3px;line-height:10.3px;color:#222;">Mes données ont des en-têtes</div><div style="left:183.4px;top:303.2px;width:633.1px;height:146.3px;background:#fff;border:1px solid #a0a0a0;box-sizing:border-box"></div><div class="t" style="left:188.7px;top:309.25px;font-size:10.3px;line-height:10.3px;color:#222;">Colonne</div><div class="t" style="left:395px;top:309.25px;font-size:10.3px;line-height:10.3px;color:#222;">Trier sur</div><div class="t" style="left:611px;top:309.25px;font-size:10.3px;line-height:10.3px;color:#222;">Ordre</div><div style="left:391.5px;top:304.5px;width:1px;height:18px;background:#e8e8e8"></div><div style="left:605.5px;top:304.5px;width:1px;height:18px;background:#e8e8e8"></div><div style="left:185px;top:347.8px;width:629.7px;height:25.2px;background:#0078d7"></div><div class="t" style="left:186.5px;top:325.55px;font-size:10.3px;line-height:10.3px;color:#222;">Trier par</div><div style="left:232px;top:323px;width:150.7px;height:19px;background:#fff;border:1px solid #b9b9b9;box-sizing:border-box"></div><div class="t" style="left:236px;top:327.55px;font-size:10.3px;line-height:10.3px;color:#222;">Mail</div><div style="left:364.7px;top:324px;width:17px;height:17px;background:#e8e8e8;border:1px solid #d0d0d0;box-sizing:border-box"></div><svg style="position:absolute;left:367.7px;top:327px;" width="12" height="12" viewBox="0 0 12 12"><path d="M3 4.5 L6 7.5 L9 4.5" fill="none" stroke="#555" stroke-width="1"/></svg><div style="left:392.4px;top:323px;width:205.60000000000002px;height:19px;background:#fff;border:1px solid #b9b9b9;box-sizing:border-box"></div><div class="t" style="left:396.4px;top:327.55px;font-size:10.3px;line-height:10.3px;color:#222;">Couleur de cellule</div><div style="left:580px;top:324px;width:17px;height:17px;background:#e8e8e8;border:1px solid #d0d0d0;box-sizing:border-box"></div><svg style="position:absolute;left:583px;top:327px;" width="12" height="12" viewBox="0 0 12 12"><path d="M3 4.5 L6 7.5 L9 4.5" fill="none" stroke="#555" stroke-width="1"/></svg><div style="left:752px;top:323px;width:61.700000000000045px;height:18px;background:#fff;border:1px solid #b9b9b9;box-sizing:border-box"></div><div class="t" style="left:756px;top:327.55px;font-size:10.3px;line-height:10.3px;color:#222;">En haut</div><div style="left:795.7px;top:324px;width:17px;height:16px;background:#e8e8e8;border:1px solid #d0d0d0;box-sizing:border-box"></div><svg style="position:absolute;left:798.7px;top:327px;" width="12" height="12" viewBox="0 0 12 12"><path d="M3 4.5 L6 7.5 L9 4.5" fill="none" stroke="#555" stroke-width="1"/></svg><div class="t" style="left:186.5px;top:350.55px;font-size:10.3px;line-height:10.3px;color:#fff;">Puis par</div><div style="left:232px;top:348.6px;width:150.7px;height:18.599999999999966px;background:#fff;border:1px solid #b9b9b9;box-sizing:border-box"></div><div class="t" style="left:236px;top:353.15px;font-size:10.3px;line-height:10.3px;color:#222;">Salaire</div><div style="left:364.7px;top:349.6px;width:17px;height:16.599999999999966px;background:#e8e8e8;border:1px solid #d0d0d0;box-sizing:border-box"></div><svg style="position:absolute;left:367.7px;top:352.6px;" width="12" height="12" viewBox="0 0 12 12"><path d="M3 4.5 L6 7.5 L9 4.5" fill="none" stroke="#555" stroke-width="1"/></svg><div style="left:392.4px;top:348.6px;width:205.60000000000002px;height:18.599999999999966px;background:#fff;border:1px solid #b9b9b9;box-sizing:border-box"></div><div class="t" style="left:396.4px;top:353.15px;font-size:10.3px;line-height:10.3px;color:#222;">Icône de mise en forme conditionnelle</div><div style="left:580px;top:349.6px;width:17px;height:16.599999999999966px;background:#e8e8e8;border:1px solid #d0d0d0;box-sizing:border-box"></div><svg style="position:absolute;left:583px;top:352.6px;" width="12" height="12" viewBox="0 0 12 12"><path d="M3 4.5 L6 7.5 L9 4.5" fill="none" stroke="#555" stroke-width="1"/></svg><div style="left:752px;top:348.6px;width:61.700000000000045px;height:17.599999999999966px;background:#fff;border:1px solid #b9b9b9;box-sizing:border-box"></div><div class="t" style="left:756px;top:353.15px;font-size:10.3px;line-height:10.3px;color:#222;">En haut</div><div style="left:795.7px;top:349.6px;width:17px;height:15.599999999999966px;background:#e8e8e8;border:1px solid #d0d0d0;box-sizing:border-box"></div><svg style="position:absolute;left:798.7px;top:352.6px;" width="12" height="12" viewBox="0 0 12 12"><path d="M3 4.5 L6 7.5 L9 4.5" fill="none" stroke="#555" stroke-width="1"/></svg><div class="t" style="left:186.5px;top:375.55px;font-size:10.3px;line-height:10.3px;color:#222;">Puis par</div><div style="left:232px;top:375.2px;width:150.7px;height:17.0px;background:#fff;border:1px solid #b9b9b9;box-sizing:border-box"></div><div class="t" style="left:236px;top:379.75px;font-size:10.3px;line-height:10.3px;color:#222;">Mail</div><div style="left:364.7px;top:376.2px;width:17px;height:15.0px;background:#e8e8e8;border:1px solid #d0d0d0;box-sizing:border-box"></div><svg style="position:absolute;left:367.7px;top:379.2px;" width="12" height="12" viewBox="0 0 12 12"><path d="M3 4.5 L6 7.5 L9 4.5" fill="none" stroke="#555" stroke-width="1"/></svg><div style="left:392.4px;top:375.2px;width:205.60000000000002px;height:17.0px;background:#fff;border:1px solid #b9b9b9;box-sizing:border-box"></div><div class="t" style="left:396.4px;top:379.75px;font-size:10.3px;line-height:10.3px;color:#222;">Couleur de police</div><div style="left:580px;top:376.2px;width:17px;height:15.0px;background:#e8e8e8;border:1px solid #d0d0d0;box-sizing:border-box"></div><svg style="position:absolute;left:583px;top:379.2px;" width="12" height="12" viewBox="0 0 12 12"><path d="M3 4.5 L6 7.5 L9 4.5" fill="none" stroke="#555" stroke-width="1"/></svg><div style="left:752px;top:375.2px;width:61.700000000000045px;height:16.0px;background:#fff;border:1px solid #b9b9b9;box-sizing:border-box"></div><div class="t" style="left:756px;top:379.75px;font-size:10.3px;line-height:10.3px;color:#222;">En haut</div><div style="left:795.7px;top:376.2px;width:17px;height:14.0px;background:#e8e8e8;border:1px solid #d0d0d0;box-sizing:border-box"></div><svg style="position:absolute;left:798.7px;top:379.2px;" width="12" height="12" viewBox="0 0 12 12"><path d="M3 4.5 L6 7.5 L9 4.5" fill="none" stroke="#555" stroke-width="1"/></svg><div style="left:609.3px;top:324.3px;width:133.2px;height:21.2px;background:#e1e1e1;border:1px solid #c6c6c6;box-sizing:border-box"></div><div style="left:612.4px;top:328.2px;width:112.6px;height:15px;background:#ffeb00;border:1px solid #777;box-sizing:border-box"></div><svg style="position:absolute;left:727px;top:329px;" width="14" height="14" viewBox="0 0 14 14"><path d="M3.5 5 L7 8.5 L10.5 5 Z" fill="#111"/></svg><div style="left:609.3px;top:349px;width:133.2px;height:22.4px;background:#dbeaf8;border:1px solid #aac6e6;box-sizing:border-box"></div><div style="left:727.3px;top:351.5px;width:1px;height:17px;background:#9a9a9a"></div><svg style="position:absolute;left:729px;top:353px;" width="14" height="14" viewBox="0 0 14 14"><path d="M3.5 5 L7 8.5 L10.5 5 Z" fill="#111"/></svg><svg style="position:absolute;left:660px;top:351px;" width="16" height="18" viewBox="0 0 16 18"><path d="M8 1.5 L14.5 8.5 L10.5 8.5 L10.5 16.5 L5.5 16.5 L5.5 8.5 L1.5 8.5 Z" fill="#4a9070"/></svg><div style="left:609.3px;top:375px;width:133.2px;height:21.2px;background:#e1e1e1;border:1px solid #c6c6c6;box-sizing:border-box"></div><div style="left:612.4px;top:378.6px;width:112.6px;height:15px;background:#ff1a00;border:1px solid #8a8a8a;box-sizing:border-box"></div><svg style="position:absolute;left:727px;top:380px;" width="14" height="14" viewBox="0 0 14 14"><path d="M3.5 5 L7 8.5 L10.5 5 Z" fill="#111"/></svg><svg style="position:absolute;left:692px;top:360px;" width="20" height="24" viewBox="0 0 20 24"><path d="M6 2.5 C6 1 8.5 1 8.5 2.5 L8.5 9 C8.5 8 11 8 11 9.3 C11 8.3 13.3 8.3 13.3 9.8 C13.3 8.8 15.6 8.8 15.6 10.3 L15.6 16 C15.6 19 14 21.5 11 21.5 L9 21.5 C6.5 21.5 5.5 20 4.5 18.5 L1.6 13.5 C0.8 12.2 2.8 10.8 3.8 12 L6 14.3 Z" fill="#fff" stroke="#111" stroke-width="1"/><path d="M8.5 9 V14 M11 9.3 V14 M13.3 9.8 V14" stroke="#111" stroke-width="0.8"/></svg><div style="left:678.5px;top:453.4px;width:63.4px;height:18px;background:#e1e1e1;border:2px solid #0078d7;box-sizing:border-box"></div><div class="t" style="left:510px;width:400px;text-align:center;top:457.75px;font-size:10.3px;line-height:10.3px;color:#222;">OK</div><div style="left:752px;top:453.4px;width:63.700000000000045px;height:18.0px;background:#e1e1e1;border:1px solid #adadad;box-sizing:border-box;"></div><div class="t" style="left:584px;width:400px;text-align:center;top:457.75px;font-size:10.3px;line-height:10.3px;color:#222;">Annuler</div>
</body></html>
